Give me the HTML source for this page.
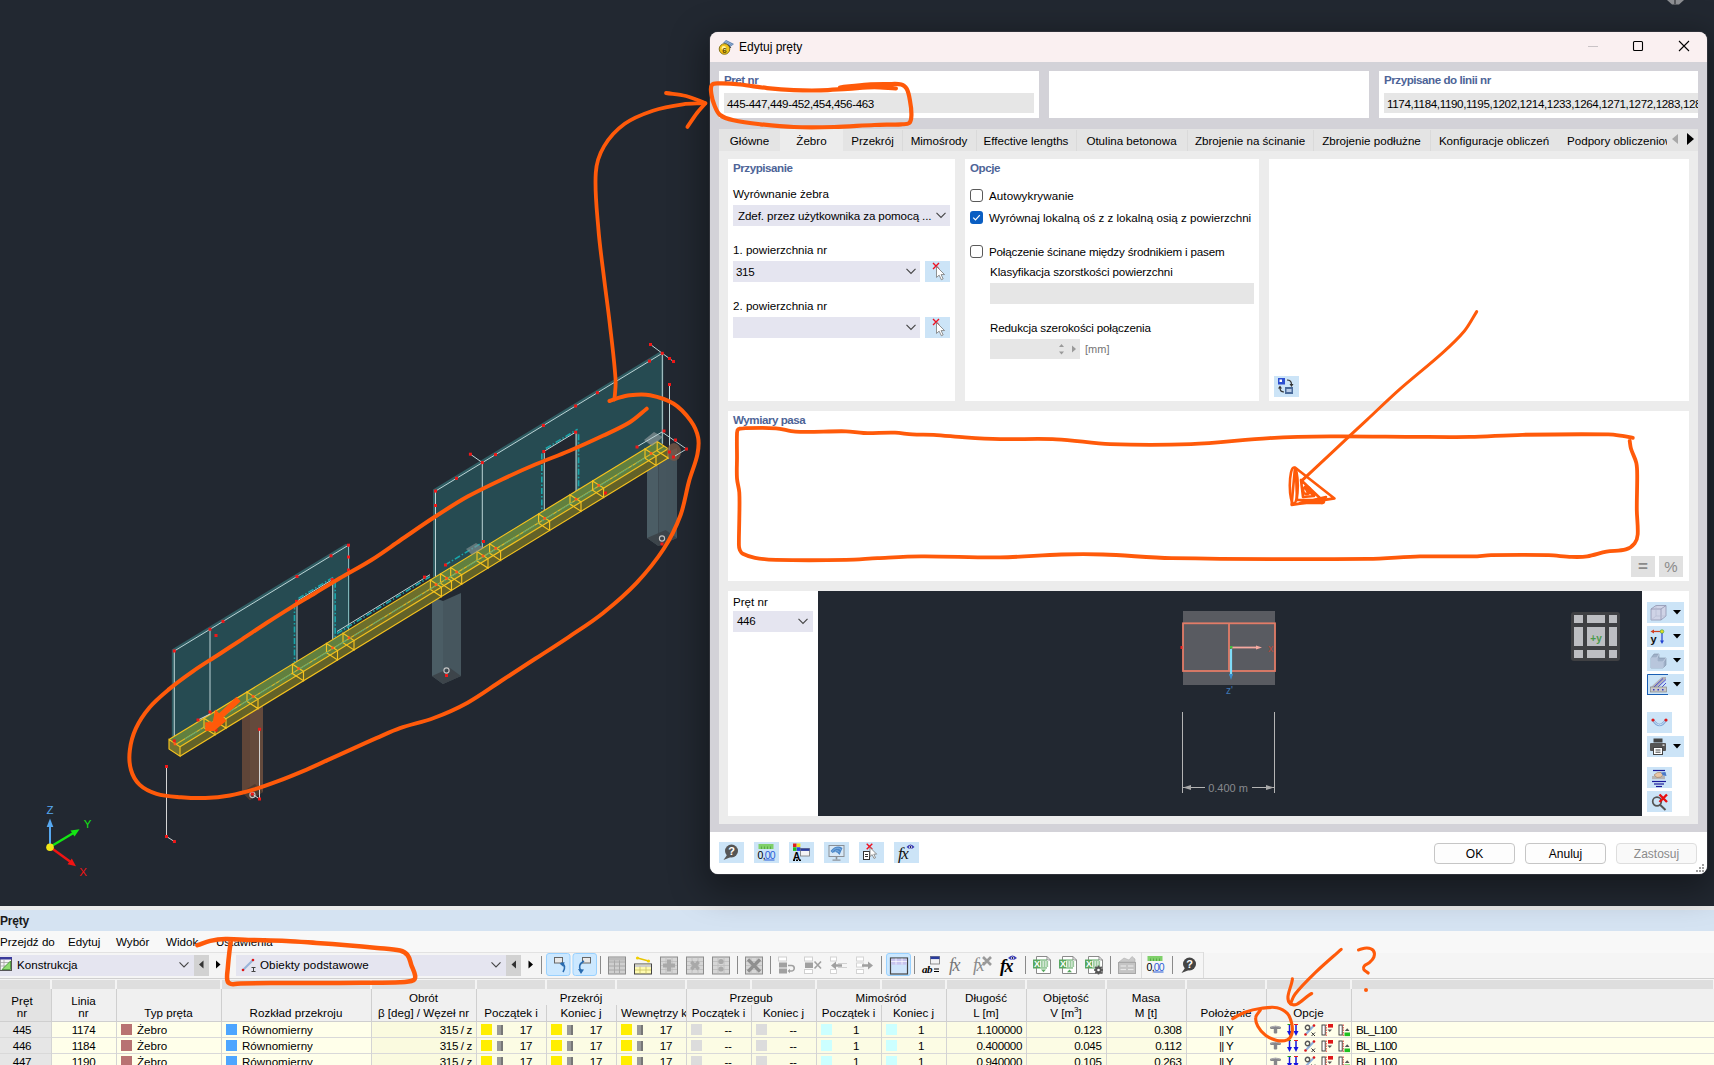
<!DOCTYPE html><html lang="pl"><head><meta charset="utf-8"><title>Edytuj pręty</title><style>
html,body{margin:0;padding:0;}
body{width:1714px;height:1065px;overflow:hidden;background:#222831;position:relative;font-family:"Liberation Sans",sans-serif;font-size:11.6px;color:#000;}
div{position:absolute;box-sizing:border-box;}
.t{white-space:nowrap;overflow:visible;}
.n{white-space:nowrap;letter-spacing:-0.36px;}
.b{font-weight:bold;color:#4d6497;white-space:nowrap;letter-spacing:-0.45px;}
svg{position:absolute;left:0;top:0;overflow:visible;}
.ib{background:#cce4f7;}
</style></head><body>
<svg width="1714" height="1065" viewBox="0 0 1714 1065">
<polygon points="171.8,649.5 346.0,543.7 349.5,545.7 349.5,635.5 171.8,739.9" fill="#2f5c62"/>
<polygon points="174.3,741.9 174.3,651.0 348.5,545.2 348.5,635.5" fill="#264b52"/>
<polygon points="296.5,667.2 296.5,601.4 332.2,579.7 332.2,645.4" fill="#222831"/>
<polygon points="332.2,579.7 335.2,581.2 335.2,645.4 332.2,645.4" fill="#2f5c62"/>
<g stroke="#bcd4d6" stroke-width="1" fill="none">
<line x1="174.3" y1="741.9" x2="174.3" y2="651.0" />
<line x1="174.3" y1="651.0" x2="348.5" y2="545.2" />
<line x1="348.5" y1="545.2" x2="348.5" y2="635.5" stroke="#7fb5b8"/>
<line x1="210.0" y1="629.3" x2="210.0" y2="720.1" />
<line x1="296.5" y1="601.4" x2="332.2" y2="579.7" />
<line x1="297.0" y1="601.4" x2="297.0" y2="667.2" />
<line x1="332.7" y1="579.7" x2="332.7" y2="645.4" />
</g>
<g stroke="#19a5aa" stroke-width="1.6" stroke-dasharray="6 2 1.5 2" fill="none">
<line x1="294.5" y1="603.4" x2="294.5" y2="667.2" />
<line x1="335.2" y1="581.7" x2="335.2" y2="645.4" />
<line x1="298.5" y1="598.4" x2="334.2" y2="576.7" />
</g>
<polygon points="433.0,489.6 659.8,351.8 663.3,353.8 663.3,443.8 433.0,582.3" fill="#2f5c62"/>
<polygon points="435.5,582.3 435.5,491.1 662.3,353.3 662.3,443.8" fill="#264b52"/>
<polygon points="543.8,516.2 543.8,451.5 575.6,432.2 575.6,496.8" fill="#222831"/>
<polygon points="575.6,432.2 578.6,433.7 578.6,496.8 575.6,496.8" fill="#2f5c62"/>
<g stroke="#bcd4d6" stroke-width="1" fill="none">
<line x1="435.5" y1="582.3" x2="435.5" y2="491.1" />
<line x1="435.5" y1="491.1" x2="662.3" y2="353.3" />
<line x1="662.3" y1="353.3" x2="662.3" y2="443.8" />
<line x1="482.3" y1="462.6" x2="482.3" y2="553.8" />
<line x1="470.4" y1="454.2" x2="482.3" y2="462.6" />
<line x1="543.8" y1="451.5" x2="575.6" y2="432.2" />
<line x1="544.3" y1="451.5" x2="544.3" y2="516.2" />
<line x1="576.1" y1="432.2" x2="576.1" y2="496.8" />
<line x1="650.5" y1="344.5" x2="662.3" y2="353.3" />
<line x1="662.3" y1="353.3" x2="673.5" y2="361.5" />
<line x1="669.5" y1="384.5" x2="669.5" y2="452.0" />
</g>
<g stroke="#19a5aa" stroke-width="1.6" stroke-dasharray="6 2 1.5 2" fill="none">
<line x1="541.8" y1="453.5" x2="541.8" y2="516.2" />
<line x1="578.6" y1="434.2" x2="578.6" y2="496.8" />
<line x1="545.8" y1="448.5" x2="577.6" y2="429.2" />
<line x1="337.0" y1="633.5" x2="430.0" y2="576.7" />
<line x1="445.0" y1="565.0" x2="484.0" y2="541.5" />
</g>
<line x1="337.0" y1="631.5" x2="430.0" y2="574.7" stroke="#bcd4d6" stroke-width="1"/>
<polygon points="242.0,702.0 250.0,706.0 250.0,800.0 242.0,792.0" fill="#5f4538"/><polygon points="250.0,706.0 263.0,698.0 263.0,792.0 250.0,800.0" fill="#644a3c"/><polygon points="242.0,792.0 250.0,800.0 263.0,792.0 255.0,784.0" fill="#4a392f" opacity="0.9"/>
<polygon points="432.0,597.0 443.0,601.0 443.0,684.0 432.0,676.0" fill="#4b5d65"/><polygon points="443.0,601.0 461.0,593.0 461.0,676.0 443.0,684.0" fill="#46565e"/><polygon points="432.0,676.0 443.0,684.0 461.0,676.0 450.0,668.0" fill="#3c4248" opacity="0.9"/>
<polygon points="647.0,452.0 658.4,456.0 658.4,546.0 647.0,538.0" fill="#4b5d65"/><polygon points="658.4,456.0 677.0,448.0 677.0,538.0 658.4,546.0" fill="#46565e"/><polygon points="647.0,538.0 658.4,546.0 677.0,538.0 665.6,530.0" fill="#3c4248" opacity="0.9"/>
<circle cx="446.5" cy="670.5" r="2.6" fill="none" stroke="#c4c4c4" stroke-width="1.1"/>
<circle cx="662" cy="538.5" r="2.6" fill="none" stroke="#c4c4c4" stroke-width="1.1"/>
<circle cx="252.5" cy="795" r="2.6" fill="none" stroke="#c4c4c4" stroke-width="1.1"/>
<polygon points="169.0,739.6 657.2,441.5 668.2,448.7 180.0,746.8" fill="#6f722c" fill-opacity="0.97"/>
<polygon points="169.0,739.6 343.0,633.3 354.0,640.5 180.0,746.8" fill="#61803f"/>
<polygon points="430.4,580.0 657.2,441.5 668.2,448.7 441.4,587.2" fill="#61803f"/>
<polygon points="180.0,746.8 668.2,448.7 668.2,458.1 180.0,756.2" fill="#656428" fill-opacity="0.98"/>
<polygon points="169.0,739.6 180.0,746.8 180.0,756.2 169.0,749.0" fill="#7d7a30" fill-opacity="0.9"/>
<g stroke="#f5c21e" stroke-width="1.15" fill="none">
<line x1="169.0" y1="739.6" x2="657.2" y2="441.5" />
<line x1="180.0" y1="746.8" x2="668.2" y2="448.7" />
<line x1="180.0" y1="756.2" x2="668.2" y2="458.1" />
<line x1="176.0" y1="744.2" x2="664.2" y2="446.1" stroke-opacity="0.85"/>
<polygon points="169.0,739.6 180.0,746.8 180.0,756.2 169.0,749.0" />
<polygon points="204.0,718.2 215.0,725.4 215.0,734.8 204.0,727.6" />
<polygon points="215.0,711.5 226.0,718.7 226.0,728.1 215.0,720.9" />
<polygon points="247.0,692.0 258.0,699.2 258.0,708.6 247.0,701.4" />
<polygon points="292.5,664.2 303.5,671.4 303.5,680.8 292.5,673.6" />
<polygon points="326.5,643.4 337.5,650.6 337.5,660.0 326.5,652.8" />
<polygon points="343.0,633.3 354.0,640.5 354.0,649.9 343.0,642.7" />
<polygon points="430.4,580.0 441.4,587.2 441.4,596.6 430.4,589.4" />
<polygon points="440.5,573.8 451.5,581.0 451.5,590.4 440.5,583.2" />
<polygon points="450.7,567.6 461.7,574.8 461.7,584.2 450.7,577.0" />
<polygon points="477.0,551.5 488.0,558.7 488.0,568.1 477.0,560.9" />
<polygon points="489.6,543.8 500.6,551.0 500.6,560.4 489.6,553.2" />
<polygon points="538.6,513.9 549.6,521.1 549.6,530.5 538.6,523.3" />
<polygon points="570.0,494.7 581.0,501.9 581.0,511.3 570.0,504.1" />
<polygon points="592.6,480.9 603.6,488.1 603.6,497.5 592.6,490.3" />
<polygon points="645.0,448.9 656.0,456.1 656.0,465.5 645.0,458.3" />
<polygon points="657.2,441.5 668.2,448.7 668.2,458.1 657.2,450.9" />
</g>
<line x1="185.0" y1="738.9" x2="645.0" y2="458.0" stroke="#1aa3a8" stroke-width="1" stroke-opacity="0.7" stroke-dasharray="14 3 2 3"/>
<rect x="173.7" y="742.7" width="2.6" height="2.6" fill="#ff5a1a"/>
<rect x="208.7" y="721.4" width="2.6" height="2.6" fill="#ff5a1a"/>
<rect x="251.7" y="695.1" width="2.6" height="2.6" fill="#ff5a1a"/>
<rect x="297.2" y="667.3" width="2.6" height="2.6" fill="#ff5a1a"/>
<rect x="331.2" y="646.6" width="2.6" height="2.6" fill="#ff5a1a"/>
<rect x="347.7" y="636.5" width="2.6" height="2.6" fill="#ff5a1a"/>
<rect x="434.7" y="583.4" width="2.6" height="2.6" fill="#ff5a1a"/>
<rect x="445.2" y="576.9" width="2.6" height="2.6" fill="#ff5a1a"/>
<rect x="455.4" y="570.7" width="2.6" height="2.6" fill="#ff5a1a"/>
<rect x="481.7" y="554.7" width="2.6" height="2.6" fill="#ff5a1a"/>
<rect x="494.3" y="547.0" width="2.6" height="2.6" fill="#ff5a1a"/>
<rect x="543.3" y="517.0" width="2.6" height="2.6" fill="#ff5a1a"/>
<rect x="574.7" y="497.9" width="2.6" height="2.6" fill="#ff5a1a"/>
<rect x="597.3" y="484.1" width="2.6" height="2.6" fill="#ff5a1a"/>
<rect x="649.7" y="452.1" width="2.6" height="2.6" fill="#ff5a1a"/>
<ellipse cx="674" cy="452" rx="7" ry="9" fill="#7a5a48" opacity="0.8"/>
<polygon points="644,440 654,432 663,437 652,446" fill="#8a9698" opacity="0.7"/>
<polygon points="466,549 476,543 484,548 472,555" fill="#8a9698" opacity="0.6"/>
<g stroke="#bcd4d6" stroke-width="1" fill="none"><polyline points="636.5,447 662,432 686.5,449 675,456"/></g>
<g stroke="#d5d5d5" stroke-width="1" fill="none">
<line x1="166.5" y1="766.5" x2="166.5" y2="836.5" />
<line x1="166.5" y1="836.5" x2="174.4" y2="841.5" />
<line x1="259.5" y1="729.3" x2="259.5" y2="799.0" />
<line x1="252.3" y1="794.0" x2="259.5" y2="799.0" />
<line x1="198.0" y1="720.0" x2="210.0" y2="714.0" />
</g>
<rect x="172.8" y="649.5" width="3.0" height="3.0" fill="#f01818"/>
<rect x="172.8" y="739.4" width="3.0" height="3.0" fill="#f01818"/>
<rect x="347.0" y="543.7" width="3.0" height="3.0" fill="#f01818"/>
<rect x="208.5" y="627.8" width="3.0" height="3.0" fill="#f01818"/>
<rect x="221.5" y="619.9" width="3.0" height="3.0" fill="#f01818"/>
<rect x="295.5" y="575.0" width="3.0" height="3.0" fill="#f01818"/>
<rect x="329.5" y="554.3" width="3.0" height="3.0" fill="#f01818"/>
<rect x="347.0" y="555.5" width="3.0" height="3.0" fill="#f01818"/>
<rect x="347.0" y="568.5" width="3.0" height="3.0" fill="#f01818"/>
<rect x="214.5" y="634.0" width="3.0" height="3.0" fill="#f01818"/>
<rect x="295.0" y="599.9" width="3.0" height="3.0" fill="#f01818"/>
<rect x="330.7" y="578.2" width="3.0" height="3.0" fill="#f01818"/>
<rect x="165.0" y="765.0" width="3.0" height="3.0" fill="#f01818"/>
<rect x="165.0" y="835.0" width="3.0" height="3.0" fill="#f01818"/>
<rect x="172.9" y="840.0" width="3.0" height="3.0" fill="#f01818"/>
<rect x="258.0" y="727.8" width="3.0" height="3.0" fill="#f01818"/>
<rect x="258.0" y="797.5" width="3.0" height="3.0" fill="#f01818"/>
<rect x="250.8" y="792.5" width="3.0" height="3.0" fill="#f01818"/>
<rect x="196.5" y="718.5" width="3.0" height="3.0" fill="#f01818"/>
<rect x="208.5" y="710.5" width="3.0" height="3.0" fill="#f01818"/>
<rect x="214.5" y="728.5" width="3.0" height="3.0" fill="#f01818"/>
<rect x="434.0" y="489.6" width="3.0" height="3.0" fill="#f01818"/>
<rect x="434.0" y="504.0" width="3.0" height="3.0" fill="#f01818"/>
<rect x="660.8" y="351.8" width="3.0" height="3.0" fill="#f01818"/>
<rect x="455.0" y="476.8" width="3.0" height="3.0" fill="#f01818"/>
<rect x="480.8" y="461.1" width="3.0" height="3.0" fill="#f01818"/>
<rect x="494.0" y="453.1" width="3.0" height="3.0" fill="#f01818"/>
<rect x="541.9" y="424.0" width="3.0" height="3.0" fill="#f01818"/>
<rect x="574.1" y="404.5" width="3.0" height="3.0" fill="#f01818"/>
<rect x="595.9" y="391.2" width="3.0" height="3.0" fill="#f01818"/>
<rect x="648.0" y="359.6" width="3.0" height="3.0" fill="#f01818"/>
<rect x="468.9" y="452.7" width="3.0" height="3.0" fill="#f01818"/>
<rect x="542.3" y="450.0" width="3.0" height="3.0" fill="#f01818"/>
<rect x="574.1" y="430.7" width="3.0" height="3.0" fill="#f01818"/>
<rect x="649.0" y="343.0" width="3.0" height="3.0" fill="#f01818"/>
<rect x="668.0" y="357.0" width="3.0" height="3.0" fill="#f01818"/>
<rect x="672.0" y="360.0" width="3.0" height="3.0" fill="#f01818"/>
<rect x="668.0" y="383.0" width="3.0" height="3.0" fill="#f01818"/>
<rect x="668.0" y="450.5" width="3.0" height="3.0" fill="#f01818"/>
<rect x="662.5" y="429.5" width="3.0" height="3.0" fill="#f01818"/>
<rect x="674.0" y="438.5" width="3.0" height="3.0" fill="#f01818"/>
<rect x="685.0" y="447.5" width="3.0" height="3.0" fill="#f01818"/>
<rect x="672.0" y="455.5" width="3.0" height="3.0" fill="#f01818"/>
<rect x="635.5" y="445.5" width="3.0" height="3.0" fill="#f01818"/>
<rect x="423.0" y="575.6" width="3.0" height="3.0" fill="#f01818"/>
<rect x="444.0" y="563.5" width="3.0" height="3.0" fill="#f01818"/>
<rect x="604.0" y="491.5" width="3.0" height="3.0" fill="#f01818"/>
<rect x="660.5" y="542.5" width="3.0" height="3.0" fill="#f01818"/>
<rect x="445.0" y="674.0" width="3.0" height="3.0" fill="#f01818"/>
<rect x="482.0" y="540.0" width="3.0" height="3.0" fill="#f01818"/>
<g stroke-linecap="butt">
<line x1="50" y1="847" x2="50" y2="826" stroke="#57a8f0" stroke-width="2"/><polygon points="46.7,827 53.3,827 50,818.5" fill="#57a8f0"/>
<line x1="50" y1="847" x2="73" y2="833.2" stroke="#14e614" stroke-width="2.4"/><polygon points="70.5,830.5 74.5,836.5 79.5,829.3" fill="#14e614"/>
<line x1="50" y1="847" x2="70" y2="861.5" stroke="#f01414" stroke-width="2.4"/><polygon points="71.8,858.5 67.5,864.2 76,866.2" fill="#f01414"/>
<circle cx="50" cy="847.2" r="3.8" fill="#f2e616"/></g>
<g font-family="Liberation Sans, sans-serif" font-size="11.5" text-anchor="middle"><text x="50" y="814" fill="#57a8f0">Z</text><text x="87.5" y="828" fill="#14e614">Y</text><text x="83" y="876" fill="#f01414">X</text></g>
<path d="M1667 0 L1684 0 L1679 4.5 L1672 4.5 Z" fill="#8d8f93"/><rect x="1674" y="0" width="2" height="4.5" fill="#55575b"/>
</svg>
<div style="left:0px;top:906px;width:1714px;height:159px;background:#f0f0f0;"></div>
<div style="left:0px;top:931px;width:1714px;height:22px;background:#f8f8f8;"></div>
<div style="left:0px;top:953px;width:1714px;height:26px;background:#f5f5f5;"></div>
<div style="left:0px;top:952px;width:1204px;height:1px;background:#e2e2e2;"></div>
<div style="left:0px;top:906px;width:1714px;height:4px;background:#ebebeb;"></div>
<div style="left:0px;top:910px;width:1714px;height:21px;background:#d5e3f2;"></div>
<div class="t" style="left:0px;top:912px;height:18px;line-height:18px;font-size:12px;color:#1a1a1a;font-weight:bold;letter-spacing:-0.2px;">Pręty</div>
<div class="t" style="left:0px;top:933px;height:18px;line-height:18px;">Przejdź do</div>
<div class="t" style="left:68px;top:933px;height:18px;line-height:18px;">Edytuj</div>
<div class="t" style="left:116px;top:933px;height:18px;line-height:18px;">Wybór</div>
<div class="t" style="left:166px;top:933px;height:18px;line-height:18px;">Widok</div>
<div class="t" style="left:216px;top:933px;height:18px;line-height:18px;">Ustawienia</div>
<div style="left:0px;top:954.5px;width:194px;height:21px;background:#e5e5f0;"></div>
<div class="t" style="left:17px;top:956px;height:17px;line-height:17px;">Konstrukcja</div>
<div style="left:194px;top:954.5px;width:15px;height:21px;background:#d2d2d2;"></div>
<div style="left:236px;top:954.5px;width:270px;height:21px;background:#e5e5f0;"></div>
<div class="t" style="left:260px;top:956px;height:17px;line-height:17px;letter-spacing:0.1px;">Obiekty podstawowe</div>
<div style="left:506px;top:954.5px;width:15px;height:21px;background:#d2d2d2;"></div>
<!--TBICONS-->
<div style="left:0px;top:978px;width:1714px;height:1px;background:#d0d0d0;"></div>
<div style="left:0px;top:979px;width:1714px;height:10px;background:#f4f4f4;"></div>
<div style="left:0px;top:980px;width:50px;height:9px;background:#dedede;"></div>
<div style="left:52px;top:980px;width:63px;height:9px;background:#dedede;"></div>
<div style="left:117px;top:980px;width:103px;height:9px;background:#dedede;"></div>
<div style="left:222px;top:980px;width:148px;height:9px;background:#dedede;"></div>
<div style="left:372px;top:980px;width:103px;height:9px;background:#dedede;"></div>
<div style="left:477px;top:980px;width:68px;height:9px;background:#dedede;"></div>
<div style="left:547px;top:980px;width:68px;height:9px;background:#dedede;"></div>
<div style="left:617px;top:980px;width:68px;height:9px;background:#dedede;"></div>
<div style="left:687px;top:980px;width:63px;height:9px;background:#dedede;"></div>
<div style="left:752px;top:980px;width:63px;height:9px;background:#dedede;"></div>
<div style="left:817px;top:980px;width:63px;height:9px;background:#dedede;"></div>
<div style="left:882px;top:980px;width:63px;height:9px;background:#dedede;"></div>
<div style="left:947px;top:980px;width:78px;height:9px;background:#dedede;"></div>
<div style="left:1027px;top:980px;width:78px;height:9px;background:#dedede;"></div>
<div style="left:1107px;top:980px;width:78px;height:9px;background:#dedede;"></div>
<div style="left:1187px;top:980px;width:78px;height:9px;background:#dedede;"></div>
<div style="left:1267px;top:980px;width:83px;height:9px;background:#dedede;"></div>
<div style="left:1352px;top:980px;width:361px;height:9px;background:#dedede;"></div>
<div style="left:0px;top:989px;width:1714px;height:32px;background:#f0f0f0;"></div>
<div style="left:0px;top:989px;width:51px;height:32px;background:#e3e3e3;"></div>
<div style="left:51px;top:989px;width:1px;height:32px;background:#cfcfcf;"></div>
<div style="left:116px;top:989px;width:1px;height:32px;background:#cfcfcf;"></div>
<div style="left:221px;top:989px;width:1px;height:32px;background:#cfcfcf;"></div>
<div style="left:371px;top:989px;width:1px;height:32px;background:#cfcfcf;"></div>
<div style="left:476px;top:989px;width:1px;height:32px;background:#cfcfcf;"></div>
<div style="left:546px;top:989px;width:1px;height:32px;background:#cfcfcf;"></div>
<div style="left:616px;top:989px;width:1px;height:32px;background:#cfcfcf;"></div>
<div style="left:686px;top:989px;width:1px;height:32px;background:#cfcfcf;"></div>
<div style="left:751px;top:989px;width:1px;height:32px;background:#cfcfcf;"></div>
<div style="left:816px;top:989px;width:1px;height:32px;background:#cfcfcf;"></div>
<div style="left:881px;top:989px;width:1px;height:32px;background:#cfcfcf;"></div>
<div style="left:946px;top:989px;width:1px;height:32px;background:#cfcfcf;"></div>
<div style="left:1026px;top:989px;width:1px;height:32px;background:#cfcfcf;"></div>
<div style="left:1106px;top:989px;width:1px;height:32px;background:#cfcfcf;"></div>
<div style="left:1186px;top:989px;width:1px;height:32px;background:#cfcfcf;"></div>
<div style="left:1266px;top:989px;width:1px;height:32px;background:#cfcfcf;"></div>
<div style="left:1351px;top:989px;width:1px;height:32px;background:#cfcfcf;"></div>
<div style="left:546px;top:989px;width:1px;height:16px;background:#f0f0f0;"></div>
<div style="left:616px;top:989px;width:1px;height:16px;background:#f0f0f0;"></div>
<div style="left:751px;top:989px;width:1px;height:16px;background:#f0f0f0;"></div>
<div style="left:881px;top:989px;width:1px;height:16px;background:#f0f0f0;"></div>
<div style="left:0px;top:1021px;width:1714px;height:1px;background:#cfcfcf;"></div>
<div class="t" style="left:0px;top:992.5px;height:15px;line-height:15px;width:44px;text-align:center;">Pręt</div>
<div class="t" style="left:0px;top:1005px;height:16px;line-height:16px;width:44px;text-align:center;">nr</div>
<div class="t" style="left:51px;top:992.5px;height:15px;line-height:15px;width:65px;text-align:center;">Linia</div>
<div class="t" style="left:51px;top:1005px;height:16px;line-height:16px;width:65px;text-align:center;">nr</div>
<div class="t" style="left:116px;top:1005px;height:16px;line-height:16px;width:105px;text-align:center;">Typ pręta</div>
<div class="t" style="left:221px;top:1005px;height:16px;line-height:16px;width:150px;text-align:center;">Rozkład przekroju</div>
<div class="t" style="left:371px;top:989.5px;height:15px;line-height:15px;width:105px;text-align:center;">Obrót</div>
<div class="t" style="left:371px;top:1005px;height:16px;line-height:16px;width:105px;text-align:center;">β [deg] / Węzeł nr</div>
<div class="t" style="left:476px;top:989.5px;height:15px;line-height:15px;width:210px;text-align:center;">Przekrój</div>
<div class="t" style="left:476px;top:1005px;height:16px;line-height:16px;width:70px;text-align:center;">Początek i</div>
<div class="t" style="left:546px;top:1005px;height:16px;line-height:16px;width:70px;text-align:center;">Koniec j</div>
<div class="t" style="left:616px;top:1005px;width:70px;height:16px;line-height:16px;overflow:hidden;padding-left:5px;">Wewnętrzy k</div>
<div class="t" style="left:686px;top:989.5px;height:15px;line-height:15px;width:130px;text-align:center;">Przegub</div>
<div class="t" style="left:686px;top:1005px;height:16px;line-height:16px;width:65px;text-align:center;">Początek i</div>
<div class="t" style="left:751px;top:1005px;height:16px;line-height:16px;width:65px;text-align:center;">Koniec j</div>
<div class="t" style="left:816px;top:989.5px;height:15px;line-height:15px;width:130px;text-align:center;">Mimośród</div>
<div class="t" style="left:816px;top:1005px;height:16px;line-height:16px;width:65px;text-align:center;">Początek i</div>
<div class="t" style="left:881px;top:1005px;height:16px;line-height:16px;width:65px;text-align:center;">Koniec j</div>
<div class="t" style="left:946px;top:989.5px;height:15px;line-height:15px;width:80px;text-align:center;">Długość</div>
<div class="t" style="left:946px;top:1005px;height:16px;line-height:16px;width:80px;text-align:center;">L [m]</div>
<div class="t" style="left:1026px;top:989.5px;height:15px;line-height:15px;width:80px;text-align:center;">Objętość</div>
<div class="t" style="left:1026px;top:1005px;height:16px;line-height:16px;width:80px;text-align:center;">V [m<sup style="font-size:8px;line-height:0;">3</sup>]</div>
<div class="t" style="left:1106px;top:989.5px;height:15px;line-height:15px;width:80px;text-align:center;">Masa</div>
<div class="t" style="left:1106px;top:1005px;height:16px;line-height:16px;width:80px;text-align:center;">M [t]</div>
<div class="t" style="left:1186px;top:1005px;height:16px;line-height:16px;width:80px;text-align:center;">Położenie</div>
<div class="t" style="left:1266px;top:1005px;height:16px;line-height:16px;width:85px;text-align:center;">Opcje</div>
<div style="left:0px;top:1022px;width:51px;height:16px;background:#e6e6e6;"></div>
<div style="left:51px;top:1022px;width:1663px;height:16px;background:#ffffea;"></div>
<div style="left:371px;top:1022px;width:105px;height:16px;background:#fafadf;"></div>
<div style="left:476px;top:1022px;width:710px;height:16px;background:#fcfce4;"></div>
<div style="left:0px;top:1037px;width:1714px;height:1px;background:#d9d9d9;"></div>
<div style="left:51px;top:1022px;width:1px;height:16px;background:#d4d4d4;"></div>
<div style="left:116px;top:1022px;width:1px;height:16px;background:#d4d4d4;"></div>
<div style="left:221px;top:1022px;width:1px;height:16px;background:#d4d4d4;"></div>
<div style="left:371px;top:1022px;width:1px;height:16px;background:#d4d4d4;"></div>
<div style="left:476px;top:1022px;width:1px;height:16px;background:#d4d4d4;"></div>
<div style="left:546px;top:1022px;width:1px;height:16px;background:#d4d4d4;"></div>
<div style="left:616px;top:1022px;width:1px;height:16px;background:#d4d4d4;"></div>
<div style="left:686px;top:1022px;width:1px;height:16px;background:#d4d4d4;"></div>
<div style="left:751px;top:1022px;width:1px;height:16px;background:#d4d4d4;"></div>
<div style="left:816px;top:1022px;width:1px;height:16px;background:#d4d4d4;"></div>
<div style="left:881px;top:1022px;width:1px;height:16px;background:#d4d4d4;"></div>
<div style="left:946px;top:1022px;width:1px;height:16px;background:#d4d4d4;"></div>
<div style="left:1026px;top:1022px;width:1px;height:16px;background:#d4d4d4;"></div>
<div style="left:1106px;top:1022px;width:1px;height:16px;background:#d4d4d4;"></div>
<div style="left:1186px;top:1022px;width:1px;height:16px;background:#d4d4d4;"></div>
<div style="left:1266px;top:1022px;width:1px;height:16px;background:#d4d4d4;"></div>
<div style="left:1351px;top:1022px;width:1px;height:16px;background:#d4d4d4;"></div>
<div class="n" style="left:0px;top:1022px;height:15px;line-height:15px;width:44px;text-align:center;">445</div>
<div class="n" style="left:51px;top:1022px;height:15px;line-height:15px;width:65px;text-align:center;">1174</div>
<div style="left:121px;top:1024px;width:11px;height:11px;background:#b87272;"></div>
<div class="t" style="left:137px;top:1022px;height:15px;line-height:15px;">Żebro</div>
<div style="left:226px;top:1024px;width:11px;height:11px;background:#4da6ff;"></div>
<div class="t" style="left:242px;top:1022px;height:15px;line-height:15px;">Równomierny</div>
<div class="n" style="left:371px;top:1022px;height:15px;line-height:15px;width:101px;text-align:right;">315 / z</div>
<div style="left:481px;top:1024px;width:11px;height:11px;background:#ffee00;"></div>
<div style="left:497px;top:1025px;width:6px;height:10px;background:#9a9a9a;border-right:2px solid #777;"></div>
<div class="n" style="left:506px;top:1022px;height:15px;line-height:15px;width:26px;text-align:right;">17</div>
<div style="left:551px;top:1024px;width:11px;height:11px;background:#ffee00;"></div>
<div style="left:567px;top:1025px;width:6px;height:10px;background:#9a9a9a;border-right:2px solid #777;"></div>
<div class="n" style="left:576px;top:1022px;height:15px;line-height:15px;width:26px;text-align:right;">17</div>
<div style="left:621px;top:1024px;width:11px;height:11px;background:#ffee00;"></div>
<div style="left:637px;top:1025px;width:6px;height:10px;background:#9a9a9a;border-right:2px solid #777;"></div>
<div class="n" style="left:646px;top:1022px;height:15px;line-height:15px;width:26px;text-align:right;">17</div>
<div style="left:691px;top:1024px;width:11px;height:11px;background:#dcdcdc;"></div>
<div class="n" style="left:718px;top:1022px;height:15px;line-height:15px;width:20px;text-align:center;">--</div>
<div style="left:756px;top:1024px;width:11px;height:11px;background:#dcdcdc;"></div>
<div class="n" style="left:783px;top:1022px;height:15px;line-height:15px;width:20px;text-align:center;">--</div>
<div style="left:821px;top:1024px;width:11px;height:11px;background:#ccffff;"></div>
<div class="n" style="left:846px;top:1022px;height:15px;line-height:15px;width:20px;text-align:center;">1</div>
<div style="left:886px;top:1024px;width:11px;height:11px;background:#ccffff;"></div>
<div class="n" style="left:911px;top:1022px;height:15px;line-height:15px;width:20px;text-align:center;">1</div>
<div class="n" style="left:946px;top:1022px;height:15px;line-height:15px;width:76px;text-align:right;">1.100000</div>
<div class="n" style="left:1026px;top:1022px;height:15px;line-height:15px;width:75.5px;text-align:right;">0.123</div>
<div class="n" style="left:1106px;top:1022px;height:15px;line-height:15px;width:75.5px;text-align:right;">0.308</div>
<div class="t" style="left:1186px;top:1022px;height:15px;line-height:15px;width:80px;text-align:center;letter-spacing:-0.7px;">|| Y</div>
<div class="t" style="left:1356px;top:1022px;height:15px;line-height:15px;letter-spacing:-0.85px;">BL_L100</div>
<div style="left:0px;top:1038px;width:51px;height:16px;background:#e6e6e6;"></div>
<div style="left:51px;top:1038px;width:1663px;height:16px;background:#ffffea;"></div>
<div style="left:371px;top:1038px;width:105px;height:16px;background:#fafadf;"></div>
<div style="left:476px;top:1038px;width:710px;height:16px;background:#fcfce4;"></div>
<div style="left:0px;top:1053px;width:1714px;height:1px;background:#d9d9d9;"></div>
<div style="left:51px;top:1038px;width:1px;height:16px;background:#d4d4d4;"></div>
<div style="left:116px;top:1038px;width:1px;height:16px;background:#d4d4d4;"></div>
<div style="left:221px;top:1038px;width:1px;height:16px;background:#d4d4d4;"></div>
<div style="left:371px;top:1038px;width:1px;height:16px;background:#d4d4d4;"></div>
<div style="left:476px;top:1038px;width:1px;height:16px;background:#d4d4d4;"></div>
<div style="left:546px;top:1038px;width:1px;height:16px;background:#d4d4d4;"></div>
<div style="left:616px;top:1038px;width:1px;height:16px;background:#d4d4d4;"></div>
<div style="left:686px;top:1038px;width:1px;height:16px;background:#d4d4d4;"></div>
<div style="left:751px;top:1038px;width:1px;height:16px;background:#d4d4d4;"></div>
<div style="left:816px;top:1038px;width:1px;height:16px;background:#d4d4d4;"></div>
<div style="left:881px;top:1038px;width:1px;height:16px;background:#d4d4d4;"></div>
<div style="left:946px;top:1038px;width:1px;height:16px;background:#d4d4d4;"></div>
<div style="left:1026px;top:1038px;width:1px;height:16px;background:#d4d4d4;"></div>
<div style="left:1106px;top:1038px;width:1px;height:16px;background:#d4d4d4;"></div>
<div style="left:1186px;top:1038px;width:1px;height:16px;background:#d4d4d4;"></div>
<div style="left:1266px;top:1038px;width:1px;height:16px;background:#d4d4d4;"></div>
<div style="left:1351px;top:1038px;width:1px;height:16px;background:#d4d4d4;"></div>
<div class="n" style="left:0px;top:1038px;height:15px;line-height:15px;width:44px;text-align:center;">446</div>
<div class="n" style="left:51px;top:1038px;height:15px;line-height:15px;width:65px;text-align:center;">1184</div>
<div style="left:121px;top:1040px;width:11px;height:11px;background:#b87272;"></div>
<div class="t" style="left:137px;top:1038px;height:15px;line-height:15px;">Żebro</div>
<div style="left:226px;top:1040px;width:11px;height:11px;background:#4da6ff;"></div>
<div class="t" style="left:242px;top:1038px;height:15px;line-height:15px;">Równomierny</div>
<div class="n" style="left:371px;top:1038px;height:15px;line-height:15px;width:101px;text-align:right;">315 / z</div>
<div style="left:481px;top:1040px;width:11px;height:11px;background:#ffee00;"></div>
<div style="left:497px;top:1041px;width:6px;height:10px;background:#9a9a9a;border-right:2px solid #777;"></div>
<div class="n" style="left:506px;top:1038px;height:15px;line-height:15px;width:26px;text-align:right;">17</div>
<div style="left:551px;top:1040px;width:11px;height:11px;background:#ffee00;"></div>
<div style="left:567px;top:1041px;width:6px;height:10px;background:#9a9a9a;border-right:2px solid #777;"></div>
<div class="n" style="left:576px;top:1038px;height:15px;line-height:15px;width:26px;text-align:right;">17</div>
<div style="left:621px;top:1040px;width:11px;height:11px;background:#ffee00;"></div>
<div style="left:637px;top:1041px;width:6px;height:10px;background:#9a9a9a;border-right:2px solid #777;"></div>
<div class="n" style="left:646px;top:1038px;height:15px;line-height:15px;width:26px;text-align:right;">17</div>
<div style="left:691px;top:1040px;width:11px;height:11px;background:#dcdcdc;"></div>
<div class="n" style="left:718px;top:1038px;height:15px;line-height:15px;width:20px;text-align:center;">--</div>
<div style="left:756px;top:1040px;width:11px;height:11px;background:#dcdcdc;"></div>
<div class="n" style="left:783px;top:1038px;height:15px;line-height:15px;width:20px;text-align:center;">--</div>
<div style="left:821px;top:1040px;width:11px;height:11px;background:#ccffff;"></div>
<div class="n" style="left:846px;top:1038px;height:15px;line-height:15px;width:20px;text-align:center;">1</div>
<div style="left:886px;top:1040px;width:11px;height:11px;background:#ccffff;"></div>
<div class="n" style="left:911px;top:1038px;height:15px;line-height:15px;width:20px;text-align:center;">1</div>
<div class="n" style="left:946px;top:1038px;height:15px;line-height:15px;width:76px;text-align:right;">0.400000</div>
<div class="n" style="left:1026px;top:1038px;height:15px;line-height:15px;width:75.5px;text-align:right;">0.045</div>
<div class="n" style="left:1106px;top:1038px;height:15px;line-height:15px;width:75.5px;text-align:right;">0.112</div>
<div class="t" style="left:1186px;top:1038px;height:15px;line-height:15px;width:80px;text-align:center;letter-spacing:-0.7px;">|| Y</div>
<div class="t" style="left:1356px;top:1038px;height:15px;line-height:15px;letter-spacing:-0.85px;">BL_L100</div>
<div style="left:0px;top:1054px;width:51px;height:16px;background:#e6e6e6;"></div>
<div style="left:51px;top:1054px;width:1663px;height:16px;background:#ffffea;"></div>
<div style="left:371px;top:1054px;width:105px;height:16px;background:#fafadf;"></div>
<div style="left:476px;top:1054px;width:710px;height:16px;background:#fcfce4;"></div>
<div style="left:0px;top:1069px;width:1714px;height:1px;background:#d9d9d9;"></div>
<div style="left:51px;top:1054px;width:1px;height:16px;background:#d4d4d4;"></div>
<div style="left:116px;top:1054px;width:1px;height:16px;background:#d4d4d4;"></div>
<div style="left:221px;top:1054px;width:1px;height:16px;background:#d4d4d4;"></div>
<div style="left:371px;top:1054px;width:1px;height:16px;background:#d4d4d4;"></div>
<div style="left:476px;top:1054px;width:1px;height:16px;background:#d4d4d4;"></div>
<div style="left:546px;top:1054px;width:1px;height:16px;background:#d4d4d4;"></div>
<div style="left:616px;top:1054px;width:1px;height:16px;background:#d4d4d4;"></div>
<div style="left:686px;top:1054px;width:1px;height:16px;background:#d4d4d4;"></div>
<div style="left:751px;top:1054px;width:1px;height:16px;background:#d4d4d4;"></div>
<div style="left:816px;top:1054px;width:1px;height:16px;background:#d4d4d4;"></div>
<div style="left:881px;top:1054px;width:1px;height:16px;background:#d4d4d4;"></div>
<div style="left:946px;top:1054px;width:1px;height:16px;background:#d4d4d4;"></div>
<div style="left:1026px;top:1054px;width:1px;height:16px;background:#d4d4d4;"></div>
<div style="left:1106px;top:1054px;width:1px;height:16px;background:#d4d4d4;"></div>
<div style="left:1186px;top:1054px;width:1px;height:16px;background:#d4d4d4;"></div>
<div style="left:1266px;top:1054px;width:1px;height:16px;background:#d4d4d4;"></div>
<div style="left:1351px;top:1054px;width:1px;height:16px;background:#d4d4d4;"></div>
<div class="n" style="left:0px;top:1054px;height:15px;line-height:15px;width:44px;text-align:center;">447</div>
<div class="n" style="left:51px;top:1054px;height:15px;line-height:15px;width:65px;text-align:center;">1190</div>
<div style="left:121px;top:1056px;width:11px;height:11px;background:#b87272;"></div>
<div class="t" style="left:137px;top:1054px;height:15px;line-height:15px;">Żebro</div>
<div style="left:226px;top:1056px;width:11px;height:11px;background:#4da6ff;"></div>
<div class="t" style="left:242px;top:1054px;height:15px;line-height:15px;">Równomierny</div>
<div class="n" style="left:371px;top:1054px;height:15px;line-height:15px;width:101px;text-align:right;">315 / z</div>
<div style="left:481px;top:1056px;width:11px;height:11px;background:#ffee00;"></div>
<div style="left:497px;top:1057px;width:6px;height:10px;background:#9a9a9a;border-right:2px solid #777;"></div>
<div class="n" style="left:506px;top:1054px;height:15px;line-height:15px;width:26px;text-align:right;">17</div>
<div style="left:551px;top:1056px;width:11px;height:11px;background:#ffee00;"></div>
<div style="left:567px;top:1057px;width:6px;height:10px;background:#9a9a9a;border-right:2px solid #777;"></div>
<div class="n" style="left:576px;top:1054px;height:15px;line-height:15px;width:26px;text-align:right;">17</div>
<div style="left:621px;top:1056px;width:11px;height:11px;background:#ffee00;"></div>
<div style="left:637px;top:1057px;width:6px;height:10px;background:#9a9a9a;border-right:2px solid #777;"></div>
<div class="n" style="left:646px;top:1054px;height:15px;line-height:15px;width:26px;text-align:right;">17</div>
<div style="left:691px;top:1056px;width:11px;height:11px;background:#dcdcdc;"></div>
<div class="n" style="left:718px;top:1054px;height:15px;line-height:15px;width:20px;text-align:center;">--</div>
<div style="left:756px;top:1056px;width:11px;height:11px;background:#dcdcdc;"></div>
<div class="n" style="left:783px;top:1054px;height:15px;line-height:15px;width:20px;text-align:center;">--</div>
<div style="left:821px;top:1056px;width:11px;height:11px;background:#ccffff;"></div>
<div class="n" style="left:846px;top:1054px;height:15px;line-height:15px;width:20px;text-align:center;">1</div>
<div style="left:886px;top:1056px;width:11px;height:11px;background:#ccffff;"></div>
<div class="n" style="left:911px;top:1054px;height:15px;line-height:15px;width:20px;text-align:center;">1</div>
<div class="n" style="left:946px;top:1054px;height:15px;line-height:15px;width:76px;text-align:right;">0.940000</div>
<div class="n" style="left:1026px;top:1054px;height:15px;line-height:15px;width:75.5px;text-align:right;">0.105</div>
<div class="n" style="left:1106px;top:1054px;height:15px;line-height:15px;width:75.5px;text-align:right;">0.263</div>
<div class="t" style="left:1186px;top:1054px;height:15px;line-height:15px;width:80px;text-align:center;letter-spacing:-0.7px;">|| Y</div>
<div class="t" style="left:1356px;top:1054px;height:15px;line-height:15px;letter-spacing:-0.85px;">BL_L100</div>
<div id="dlg" style="left:710px;top:32px;width:997px;height:842px;background:#d3d2d8;border-radius:8px;overflow:hidden;box-shadow:0 0 0 1px rgba(50,52,60,.9),0 10px 34px 6px rgba(0,0,0,.38);"></div>
<div style="left:710px;top:32px;width:997px;height:30px;background:#faf0f1;border-radius:8px 8px 0 0;"></div>
<div class="t" style="left:739px;top:38px;height:18px;line-height:18px;font-size:12px;color:#000;">Edytuj pręty</div>
<div style="left:710px;top:832px;width:997px;height:42px;background:#ffffff;border-radius:0 0 8px 8px;"></div>
<div style="left:719px;top:71px;width:320px;height:47px;background:#fff;"></div>
<div style="left:1049px;top:71px;width:320px;height:47px;background:#fff;"></div>
<div style="left:1379px;top:71px;width:319px;height:47px;background:#fff;"></div>
<div class="b" style="left:724px;top:72px;height:16px;line-height:16px;">Pręt nr</div>
<div class="b" style="left:1384px;top:72px;height:16px;line-height:16px;">Przypisane do linii nr</div>
<div style="left:724px;top:93px;width:310px;height:20px;background:#e6e6e6;"></div>
<div style="left:1384px;top:93px;width:314px;height:20px;background:#e6e6e6;overflow:hidden;"></div>
<div class="n" style="left:727px;top:94px;height:19px;line-height:19px;">445-447,449-452,454,456-463</div>
<div class="n" style="left:1387px;top:94px;height:19px;line-height:19px;width:311px;overflow:hidden;">1174,1184,1190,1195,1202,1214,1233,1264,1271,1272,1283,1284,1290</div>
<div style="left:719px;top:129px;width:979px;height:22px;background:#e4e4e4;"></div>
<div style="left:719px;top:151px;width:979px;height:673px;background:#ececec;"></div>
<div style="left:780px;top:130px;width:1px;height:21px;background:#dadada;"></div>
<div class="t" style="left:719px;top:132px;height:17px;line-height:17px;width:61px;text-align:center;">Główne</div>
<div style="left:780px;top:129px;width:63px;height:23px;background:#ececec;"></div>
<div class="t" style="left:780px;top:132px;height:17px;line-height:17px;width:63px;text-align:center;">Żebro</div>
<div style="left:902px;top:130px;width:1px;height:21px;background:#dadada;"></div>
<div class="t" style="left:843px;top:132px;height:17px;line-height:17px;width:59px;text-align:center;">Przekrój</div>
<div style="left:976px;top:130px;width:1px;height:21px;background:#dadada;"></div>
<div class="t" style="left:902px;top:132px;height:17px;line-height:17px;width:74px;text-align:center;">Mimośrody</div>
<div style="left:1076px;top:130px;width:1px;height:21px;background:#dadada;"></div>
<div class="t" style="left:976px;top:132px;height:17px;line-height:17px;width:100px;text-align:center;">Effective lengths</div>
<div style="left:1187px;top:130px;width:1px;height:21px;background:#dadada;"></div>
<div class="t" style="left:1076px;top:132px;height:17px;line-height:17px;width:111px;text-align:center;">Otulina betonowa</div>
<div style="left:1313px;top:130px;width:1px;height:21px;background:#dadada;"></div>
<div class="t" style="left:1187px;top:132px;height:17px;line-height:17px;width:126px;text-align:center;">Zbrojenie na ścinanie</div>
<div style="left:1430px;top:130px;width:1px;height:21px;background:#dadada;"></div>
<div class="t" style="left:1313px;top:132px;height:17px;line-height:17px;width:117px;text-align:center;">Zbrojenie podłużne</div>
<div class="t" style="left:1430px;top:132px;height:17px;line-height:17px;width:128px;text-align:center;">Konfiguracje obliczeń</div>
<div class="t" style="left:1558px;top:132px;height:17px;line-height:17px;width:109px;overflow:hidden;padding-left:9px;">Podpory obliczeniowe</div>
<svg width="1714" height="1065" style="pointer-events:none"><polygon points="1678,134 1678,144 1672,139" fill="#a8a8a8"/><polygon points="1687,133 1687,145 1694,139" fill="#000"/></svg>
<div style="left:728px;top:159px;width:227px;height:242px;background:#fff;"></div>
<div style="left:965px;top:159px;width:294px;height:242px;background:#fff;"></div>
<div style="left:1269px;top:159px;width:420px;height:242px;background:#fff;"></div>
<div class="b" style="left:733px;top:160px;height:16px;line-height:16px;">Przypisanie</div>
<div class="b" style="left:970px;top:160px;height:16px;line-height:16px;">Opcje</div>
<div class="t" style="left:733px;top:186px;height:16px;line-height:16px;">Wyrównanie żebra</div>
<div style="left:733px;top:205px;width:217px;height:21px;background:#e5e5f0;"></div>
<div class="t" style="left:738px;top:207px;height:17px;line-height:17px;letter-spacing:-0.1px;">Zdef. przez użytkownika za pomocą ...</div>
<div class="t" style="left:733px;top:242px;height:16px;line-height:16px;">1. powierzchnia nr</div>
<div style="left:733px;top:261px;width:187px;height:21px;background:#e5e5f0;"></div>
<div class="n" style="left:736px;top:263px;height:17px;line-height:17px;">315</div>
<div style="left:925px;top:261px;width:25px;height:21px;background:#cce4f7;"></div>
<div class="t" style="left:733px;top:298px;height:16px;line-height:16px;">2. powierzchnia nr</div>
<div style="left:733px;top:317px;width:187px;height:21px;background:#e5e5f0;"></div>
<div style="left:925px;top:317px;width:25px;height:21px;background:#cce4f7;"></div>
<div style="left:970px;top:189px;width:13px;height:13px;background:#fff;border-radius:3px;border:1px solid #5a5a5a;"></div>
<div style="left:970px;top:211px;width:13px;height:13px;background:#0a5ec2;border-radius:3px;"><svg width="13" height="13" viewBox="0 0 13 13"><path d="M3.2 6.6 L5.5 8.9 L9.8 4.2" fill="none" stroke="#fff" stroke-width="1.2"/></svg></div>
<div style="left:970px;top:245px;width:13px;height:13px;background:#fff;border-radius:3px;border:1px solid #5a5a5a;"></div>
<div class="t" style="left:989px;top:188px;height:16px;line-height:16px;letter-spacing:0.08px;">Autowykrywanie</div>
<div class="t" style="left:989px;top:210px;height:16px;line-height:16px;">Wyrównaj lokalną oś z z lokalną osią z powierzchni</div>
<div class="t" style="left:989px;top:244px;height:16px;line-height:16px;letter-spacing:-0.17px;">Połączenie ścinane między środnikiem i pasem</div>
<div class="t" style="left:990px;top:264px;height:16px;line-height:16px;letter-spacing:-0.1px;">Klasyfikacja szorstkości powierzchni</div>
<div style="left:990px;top:283px;width:264px;height:21px;background:#e6e6e6;"></div>
<div class="t" style="left:990px;top:320px;height:16px;line-height:16px;letter-spacing:-0.14px;">Redukcja szerokości połączenia</div>
<div style="left:990px;top:339px;width:90px;height:20px;background:#e6e6e6;"></div>
<div class="t" style="left:1085px;top:341px;height:16px;line-height:16px;font-size:11px;color:#747474;">[mm]</div>
<div style="left:1274px;top:376px;width:25px;height:21px;background:#cce4f7;"></div>
<div style="left:728px;top:411px;width:961px;height:170px;background:#fff;"></div>
<div class="b" style="left:733px;top:412px;height:16px;line-height:16px;">Wymiary pasa</div>
<div style="left:1631px;top:556px;width:24px;height:21px;background:#e1e1e1;"></div>
<div style="left:1659px;top:556px;width:24px;height:21px;background:#e1e1e1;"></div>
<div class="t" style="left:1631px;top:556px;height:21px;line-height:21px;font-size:17px;color:#8a8a8a;width:24px;text-align:center;font-weight:bold;">=</div>
<div class="t" style="left:1659px;top:556px;height:21px;line-height:21px;font-size:15px;color:#8a8a8a;width:24px;text-align:center;">%</div>
<div style="left:728px;top:591px;width:961px;height:225px;background:#fff;"></div>
<div class="t" style="left:733px;top:594px;height:16px;line-height:16px;">Pręt nr</div>
<div style="left:733px;top:611px;width:80px;height:21px;background:#e5e5f0;"></div>
<div class="n" style="left:737px;top:612px;height:18px;line-height:18px;">446</div>
<div style="left:818px;top:591px;width:824px;height:225px;background:#222831;"></div>
<div style="left:1183px;top:611px;width:92px;height:74px;background:#595b61;"></div>
<svg width="1714" height="1065"><g fill="none" stroke="#e27c68" stroke-width="1.8"><rect x="1183" y="623.3" width="92" height="47.7"/><line x1="1229" y1="623" x2="1229" y2="671"/></g><rect x="1180.5" y="646" width="2" height="3" fill="#e02020"/><line x1="1231" y1="647.5" x2="1258" y2="647.5" stroke="#f5a9a0" stroke-width="1.8"/><polygon points="1256,645.5 1262,647.5 1256,649.5" fill="#f5a9a0"/><line x1="1231" y1="649" x2="1231" y2="676" stroke="#7fdcf8" stroke-width="2.2"/><rect x="1230" y="646" width="2.5" height="2.5" fill="#40c040"/><polygon points="1229,674 1233,674 1231,680" fill="#3a8fd0"/><g stroke="#b4b4b4" stroke-width="1"><line x1="1182.5" y1="712" x2="1182.5" y2="793"/><line x1="1274.5" y1="712" x2="1274.5" y2="793"/><line x1="1183" y1="787.5" x2="1205" y2="787.5"/><line x1="1252" y1="787.5" x2="1274" y2="787.5"/></g><polygon points="1183,787.5 1191,785 1191,790" fill="#a8a8a8"/><polygon points="1274,787.5 1266,785 1266,790" fill="#a8a8a8"/><text x="1228" y="791.5" font-size="11" fill="#888a8e" text-anchor="middle" font-family="Liberation Sans, sans-serif">0.400 m</text><text x="1268" y="651.5" font-size="10.5" fill="#b5493a" font-family="Liberation Sans, sans-serif">x</text><text x="1226" y="693.5" font-size="10" fill="#3f78b5" font-family="Liberation Sans, sans-serif">z'</text></svg>
<svg width="1714" height="1065"><rect x="1571" y="612" width="49" height="49" rx="3" fill="#3f4043"/><g fill="#bdbec2"><rect x="1574" y="615" width="9" height="8"/><rect x="1587" y="615" width="18" height="8"/><rect x="1609" y="615" width="8" height="8"/><rect x="1574" y="627" width="9" height="19"/><rect x="1587" y="627" width="18" height="19"/><rect x="1609" y="627" width="8" height="19"/><rect x="1574" y="650" width="9" height="8"/><rect x="1587" y="650" width="18" height="8"/><rect x="1609" y="650" width="8" height="8"/></g><text x="1596" y="642" font-size="10" font-weight="bold" fill="#4a9a4a" text-anchor="middle" font-family="Liberation Sans, sans-serif">+y</text></svg>
<div style="left:1647px;top:602px;width:37px;height:21px;background:#cce4f7;"></div>
<svg width="1714" height="1065"><polygon points="1673,610 1681,610 1677,614.5" fill="#000"/></svg>
<div style="left:1647px;top:626px;width:37px;height:21px;background:#cce4f7;"></div>
<svg width="1714" height="1065"><polygon points="1673,634 1681,634 1677,638.5" fill="#000"/></svg>
<div style="left:1647px;top:650px;width:37px;height:21px;background:#cce4f7;"></div>
<svg width="1714" height="1065"><polygon points="1673,658 1681,658 1677,662.5" fill="#000"/></svg>
<div style="left:1647px;top:674px;width:37px;height:21px;background:#cce4f7;"></div>
<svg width="1714" height="1065"><polygon points="1673,682 1681,682 1677,686.5" fill="#000"/></svg>
<div style="left:1647px;top:736px;width:37px;height:21px;background:#cce4f7;"></div>
<svg width="1714" height="1065"><polygon points="1673,744 1681,744 1677,748.5" fill="#000"/></svg>
<div style="left:1647px;top:712px;width:25px;height:21px;background:#cce4f7;"></div>
<div style="left:1647px;top:767px;width:25px;height:21px;background:#cce4f7;"></div>
<div style="left:1647px;top:791px;width:25px;height:21px;background:#cce4f7;"></div>
<!--RICONS-->
<div style="left:719px;top:842px;width:25px;height:21px;background:#cce4f7;"></div>
<div style="left:754px;top:842px;width:25px;height:21px;background:#cce4f7;"></div>
<div style="left:789px;top:842px;width:25px;height:21px;background:#cce4f7;"></div>
<div style="left:824px;top:842px;width:25px;height:21px;background:#cce4f7;"></div>
<div style="left:859px;top:842px;width:25px;height:21px;background:#cce4f7;"></div>
<div style="left:894px;top:842px;width:25px;height:21px;background:#cce4f7;"></div>
<!--FICONS-->
<div style="left:1434px;top:843px;width:81px;height:21px;background:#fdfdfd;border:1px solid #c6c6c6;border-radius:4px;"></div>
<div class="t" style="left:1434px;top:846px;height:17px;line-height:17px;font-size:12px;color:#000;width:81px;text-align:center;">OK</div>
<div style="left:1525px;top:843px;width:81px;height:21px;background:#fdfdfd;border:1px solid #c6c6c6;border-radius:4px;"></div>
<div class="t" style="left:1525px;top:846px;height:17px;line-height:17px;font-size:12px;color:#000;width:81px;text-align:center;">Anuluj</div>
<div style="left:1616px;top:843px;width:81px;height:21px;background:#fdfdfd;border:1px solid #c6c6c6;border-radius:4px;border-color:#dedede;background:#f9f9f9;"></div>
<div class="t" style="left:1616px;top:846px;height:17px;line-height:17px;font-size:12px;color:#8a8a8a;width:81px;text-align:center;">Zastosuj</div>
<svg width="1714" height="1065"><g fill="#a0a0a0"><rect x="1702" y="864" width="2" height="2"/><rect x="1699" y="867" width="2" height="2"/><rect x="1702" y="867" width="2" height="2"/><rect x="1696" y="870" width="2" height="2"/><rect x="1699" y="870" width="2" height="2"/><rect x="1702" y="870" width="2" height="2"/></g></svg>
<svg width="1714" height="1065"><line x1="1588" y1="46.5" x2="1598" y2="46.5" stroke="#c9c3c6" stroke-width="1"/><rect x="1633.5" y="41.5" width="9" height="9" rx="1" fill="none" stroke="#000" stroke-width="1.1"/><path d="M1679 41 L1689 51 M1689 41 L1679 51" stroke="#000" stroke-width="1.1" fill="none"/></svg>
<!--DICONS-->
<svg width="1714" height="1065" viewBox="0 0 1714 1065">
<g transform="translate(718,39)"><path d="M8 1 L16 5 L12 8 L5 4 Z" fill="#5c7fae"/><path d="M6 2.5 L13 6.5 M7 1.8 L14.5 5.8" stroke="#a9c4e4" stroke-width="0.7"/><circle cx="6.5" cy="10" r="5.3" fill="#f2c21a" stroke="#7a6a10" stroke-width="0.9"/><circle cx="5.8" cy="9.3" r="2.2" fill="#fff3a0"/><text x="6.5" y="13.5" font-size="8" font-weight="bold" fill="#5a4a00" text-anchor="middle" font-family="Liberation Sans, sans-serif">6</text><path d="M10 5.5 L13 9" stroke="#444" stroke-width="1"/></g>
<path d="M936.5 212.8 L941 217.4 L945.5 212.8" fill="none" stroke="#444" stroke-width="1.1"/>
<path d="M906.5 268.8 L911 273.4 L915.5 268.8" fill="none" stroke="#444" stroke-width="1.1"/>
<path d="M906.5 324.8 L911 329.4 L915.5 324.8" fill="none" stroke="#444" stroke-width="1.1"/>
<path d="M798.5 618.8 L803 623.4 L807.5 618.8" fill="none" stroke="#444" stroke-width="1.1"/>
<path d="M933 263 L939 269 M939 263 L933 269" stroke="#f01020" stroke-width="1.4" fill="none"/><g transform="translate(936.5,266.5)"><path d="M0 0 L0 10.924999999999999 L2.6449999999999996 8.625 L4.83 13.225 L6.669999999999999 12.42 L4.6 8.049999999999999 L8.049999999999999 8.049999999999999 Z" fill="#fff" stroke="#777" stroke-width="0.8"/></g>
<path d="M933 319 L939 325 M939 319 L933 325" stroke="#f01020" stroke-width="1.4" fill="none"/><g transform="translate(936.5,322.5)"><path d="M0 0 L0 10.924999999999999 L2.6449999999999996 8.625 L4.83 13.225 L6.669999999999999 12.42 L4.6 8.049999999999999 L8.049999999999999 8.049999999999999 Z" fill="#fff" stroke="#777" stroke-width="0.8"/></g>
<g fill="#9a9a9a"><polygon points="1059,347 1064,347 1061.5,344"/><polygon points="1059,351.5 1064,351.5 1061.5,354.5"/><polygon points="1072,345.5 1072,352.5 1076,349"/></g>
<g transform="translate(1278,378)"><rect x="0" y="0" width="7" height="6.5" fill="#2c4fd0"/><rect x="1.5" y="1.5" width="2.5" height="2.5" fill="#fff"/><rect x="7" y="9" width="8" height="7" fill="#4a6a9a"/><rect x="8.5" y="11" width="5" height="3" fill="#b8cce8"/><path d="M9 2 Q13.5 2 13.5 6.5" fill="none" stroke="#333" stroke-width="1.2"/><polygon points="11.5,6 15.5,6 13.5,9" fill="#333"/><path d="M6 14 Q2 14 2 10" fill="none" stroke="#333" stroke-width="1.2"/><polygon points="0,10.5 4,10.5 2,7.5" fill="#333"/></g>
<g transform="translate(722,844)"><circle cx="9.5" cy="7" r="6.5" fill="#555"/><path d="M5 11 L1.5 16 L9 13 Z" fill="#555"/><text x="9.5" y="11" font-size="11" font-weight="bold" fill="#fff" text-anchor="middle" font-family="Liberation Sans, sans-serif">?</text></g>
<g transform="translate(757.5,844)"><rect x="1" y="0" width="15" height="5" fill="#7fd06a"/><g stroke="#4fa040" stroke-width="0.8"><line x1="4" y1="2.5" x2="4" y2="5"/><line x1="7" y1="2.5" x2="7" y2="5"/><line x1="10" y1="2.5" x2="10" y2="5"/><line x1="13" y1="2.5" x2="13" y2="5"/></g><text x="0" y="14.5" font-size="10.5" fill="#000" font-family="Liberation Sans, sans-serif" letter-spacing="-0.7">0,</text><text x="7.2" y="14.5" font-size="10.5" fill="#2a5fd8" font-family="Liberation Sans, sans-serif" letter-spacing="-0.7">00</text><line x1="7.5" y1="16" x2="17" y2="16" stroke="#2a5fd8" stroke-width="1"/></g>
<g transform="translate(793,843.5)"><rect x="0" y="0" width="3.6" height="3.6" fill="#e02020"/><rect x="3.8" y="0" width="3.6" height="3.6" fill="#f0e020"/><rect x="0" y="3.8" width="3.6" height="3.6" fill="#20c020"/><rect x="3.8" y="3.8" width="3.6" height="3.6" fill="#3040e0"/><text x="0" y="16" font-size="10" font-weight="bold" fill="#000" font-family="Liberation Sans, sans-serif">A</text><rect x="7.5" y="5" width="9" height="7.5" fill="#f4f4f4" stroke="#777" stroke-width="0.8"/><rect x="7.5" y="5" width="9" height="2.4" fill="#2a3c9c"/><rect x="0" y="16" width="2" height="1.5" fill="#000"/><rect x="3" y="16" width="2" height="1.5" fill="#000"/><rect x="6" y="16" width="2" height="1.5" fill="#000"/></g>
<g transform="translate(828.5,845)"><rect x="0.5" y="0.5" width="15" height="11" fill="#d8e8f6" stroke="#8a8f96" stroke-width="1"/><path d="M2 6 Q8 -1 14 3 L11 10 Q8 5 4 8 Z" fill="#4a86c8"/><path d="M3.5 6.5 Q8 1 12.5 4.5 M5 8 Q8 4 11 7" stroke="#9cc4ea" stroke-width="0.7" fill="none"/><rect x="7.2" y="12" width="1.6" height="2.5" fill="#8a8f96"/><rect x="4" y="14.5" width="8" height="1.2" fill="#8a8f96"/></g>
<g transform="translate(862,844)"><rect x="1.5" y="7.5" width="6" height="8" fill="#fff" stroke="#333" stroke-width="1"/><line x1="3" y1="10.5" x2="6" y2="10.5" stroke="#333" stroke-width="1"/><line x1="3" y1="12.5" x2="6" y2="12.5" stroke="#333" stroke-width="1"/></g><path d="M866.7 843.7 L872.3 849.3 M872.3 843.7 L866.7 849.3" stroke="#f01020" stroke-width="1.4" fill="none"/><g transform="translate(870,847.5)"><path d="M0 0 L0 9.025 L2.1849999999999996 7.125 L3.9899999999999998 10.924999999999999 L5.51 10.26 L3.8 6.6499999999999995 L6.6499999999999995 6.6499999999999995 Z" fill="#fff" stroke="#777" stroke-width="0.8"/></g>
<text x="898" y="859" font-size="17" font-style="italic"  fill="#111" font-family="Liberation Serif, serif" letter-spacing="-1.5">fx</text><g transform="translate(906.5,844)"><path d="M0 3 Q4.0 -2 8 3 Q4.0 7 0 3 Z" fill="#3a3cb8"/><circle cx="4.0" cy="3" r="1.6" fill="#fff"/><circle cx="4.0" cy="3" r="0.9" fill="#101050"/></g>
<g transform="translate(1650,604)"><path d="M1 5 L6 1.5 L16 1.5 L16 12 L11 16 L1 16 Z" fill="#cfd3e6" stroke="#8f94b0" stroke-width="0.8"/><path d="M1 5 H11 V16 M11 5 L16 1.5" fill="none" stroke="#8f94b0" stroke-width="0.8"/><path d="M6 1.5 V12 H16 M6 12 L1 16" fill="none" stroke="#b4b8d0" stroke-width="0.6"/></g>
<g transform="translate(1650,628)"><line x1="3" y1="3.5" x2="12" y2="3.5" stroke="#d04020" stroke-width="1.2"/><polygon points="0.5,3.5 4,1.5 4,5.5" fill="#d04020"/><line x1="12" y1="3.5" x2="12" y2="13" stroke="#2040d0" stroke-width="1.2"/><polygon points="12,16 10,12.5 14,12.5" fill="#2040d0"/><circle cx="12" cy="3.5" r="1.8" fill="#e8e020" stroke="#40a040" stroke-width="0.6"/><text x="0.5" y="15" font-size="11" font-weight="bold" fill="#111" font-family="Liberation Sans, sans-serif">y</text></g>
<g transform="translate(1650,652)"><path d="M1 6 L4 2 H9 V6 H16 L16 13 L13 16 H1 Z" fill="#9fb0c8" stroke="#7f90a8" stroke-width="0.6"/><path d="M1 6 H7 V10 H13 V16 M7 6 L9 2 M13 10 L16 6" fill="none" stroke="#c9d6e8" stroke-width="0.8"/><path d="M1 6 H7 V10 H13 V16 H1 Z" fill="#b8c6dc"/></g>
<path d="M1647.5 695 V674.5 H1668" fill="none" stroke="#1a5fb4" stroke-width="1"/><line x1="1647" y1="694.5" x2="1668" y2="694.5" stroke="#1a5fb4" stroke-width="1"/>
<g transform="translate(1650,676)"><path d="M1 11 L12 1 H16 V3 L7 11 Z" fill="#b0b0b8"/><g stroke="#4a4ad0" stroke-width="1"><line x1="4" y1="11" x2="13" y2="2.5"/><line x1="8" y1="11" x2="16" y2="3.5"/><line x1="12" y1="11" x2="16" y2="7"/></g><rect x="0.5" y="11" width="16" height="5" fill="#c8c8c8" stroke="#888" stroke-width="0.7"/><g fill="#3a3ac0"><rect x="3" y="13" width="1.5" height="1.5"/><rect x="7.5" y="13" width="1.5" height="1.5"/><rect x="12" y="13" width="1.5" height="1.5"/></g></g>
<g transform="translate(1651,717)"><path d="M2 3 Q8.5 13 15 3" fill="none" stroke="#7fa8d8" stroke-width="2.4"/><path d="M2 3 Q8.5 13 15 3" fill="none" stroke="#dbe9f8" stroke-width="0.9"/><circle cx="2" cy="3" r="1.6" fill="#e01818"/><circle cx="15" cy="3" r="1.6" fill="#e01818"/></g>
<g transform="translate(1650,738)"><rect x="3.5" y="0.5" width="9" height="4" fill="#444" /><rect x="0" y="5" width="16" height="8" rx="1" fill="#555"/><rect x="12.5" y="6.5" width="2" height="1.2" fill="#fff"/><rect x="3.5" y="9.5" width="9" height="7" fill="#fff" stroke="#444" stroke-width="1"/><line x1="5.5" y1="12" x2="10.5" y2="12" stroke="#444"/><line x1="5.5" y1="14.2" x2="10.5" y2="14.2" stroke="#444"/></g>
<g transform="translate(1651,769)"><g stroke="#1a1a9a" stroke-width="1.2"><line x1="2" y1="1.5" x2="14" y2="1.5"/><line x1="1" y1="12.5" x2="15" y2="12.5"/><line x1="3" y1="15" x2="13" y2="15"/><line x1="5" y1="17.5" x2="11" y2="17.5"/></g><rect x="1" y="7" width="13" height="3.2" fill="#b4b4b4"/><path d="M3 6 Q6 2.5 10 3.5 L12 6 Q10 9 6 8.5 Z" fill="#e8c8a8" stroke="#a07858" stroke-width="0.6"/><path d="M10 3.5 L14.5 3 L15.5 7 L12 6.5 Z" fill="#4a7ac8"/></g>
<g transform="translate(1651,793)"><circle cx="6" cy="8.5" r="4.3" fill="none" stroke="#555" stroke-width="1.7"/><line x1="9" y1="11.7" x2="14.5" y2="17" stroke="#555" stroke-width="2"/><path d="M8.5 1.5 L16 9 M16 1.5 L8.5 9" stroke="#e81010" stroke-width="2.4"/></g>
<g transform="translate(0,957)"><rect x="0" y="0.5" width="11.5" height="13" fill="#f4f4f4" stroke="#555" stroke-width="1"/><rect x="0" y="0" width="12" height="2.5" fill="#3a3a9a"/><g stroke="#999" stroke-width="0.7"><line x1="0" y1="5.5" x2="11" y2="5.5"/><line x1="0" y1="9" x2="11" y2="9"/><line x1="4" y1="3" x2="4" y2="13"/></g><path d="M2 12.5 L10.5 4 V12.5 Z" fill="#8fdc70" stroke="#3a8a2a" stroke-width="0.8"/></g>
<path d="M179.5 962.3 L184 966.9 L188.5 962.3" fill="none" stroke="#444" stroke-width="1.1"/>
<path d="M491.5 962.3 L496 966.9 L500.5 962.3" fill="none" stroke="#444" stroke-width="1.1"/>
<polygon points="203.5,960.5 199,964.5 203.5,968.5" fill="#333"/>
<polygon points="216,960.5 220.5,964.5 216,968.5" fill="#000"/>
<polygon points="516.0,960.5 511.5,964.5 516.0,968.5" fill="#333"/>
<polygon points="528.5,960.5 533.0,964.5 528.5,968.5" fill="#000"/>
<g transform="translate(241,958)"><line x1="2" y1="12" x2="12" y2="2" stroke="#9ab4d8" stroke-width="2.2"/><circle cx="2" cy="12" r="1.3" fill="#e01818"/><circle cx="12" cy="2" r="1.3" fill="#e01818"/><path d="M10.5 9.5 H14.5 M12.5 9.5 V13.5 M10.5 13.5 H14.5" stroke="#444" stroke-width="1" fill="none"/></g>
<line x1="541.5" y1="956" x2="541.5" y2="974" stroke="#8a8a8a" stroke-width="1"/>
<line x1="600.5" y1="956" x2="600.5" y2="974" stroke="#8a8a8a" stroke-width="1"/>
<line x1="737.5" y1="956" x2="737.5" y2="974" stroke="#8a8a8a" stroke-width="1"/>
<line x1="770.5" y1="956" x2="770.5" y2="974" stroke="#8a8a8a" stroke-width="1"/>
<line x1="881.5" y1="956" x2="881.5" y2="974" stroke="#8a8a8a" stroke-width="1"/>
<line x1="914.5" y1="956" x2="914.5" y2="974" stroke="#8a8a8a" stroke-width="1"/>
<line x1="1025.5" y1="956" x2="1025.5" y2="974" stroke="#8a8a8a" stroke-width="1"/>
<line x1="1110.5" y1="956" x2="1110.5" y2="974" stroke="#8a8a8a" stroke-width="1"/>
<line x1="1172.5" y1="956" x2="1172.5" y2="974" stroke="#8a8a8a" stroke-width="1"/>
<line x1="1141.5" y1="952" x2="1141.5" y2="978" stroke="#dcdcdc" stroke-width="1"/>
<line x1="1203.5" y1="952" x2="1203.5" y2="978" stroke="#dcdcdc" stroke-width="1"/>
<rect x="546.5" y="953.5" width="23.5" height="22" rx="2.5" fill="#cce8ff" stroke="#99d1ff" stroke-width="1"/>
<rect x="573.0" y="953.5" width="23.5" height="22" rx="2.5" fill="#cce8ff" stroke="#99d1ff" stroke-width="1"/>
<rect x="886.5" y="953.5" width="24" height="22" rx="2.5" fill="#cce8ff" stroke="#99d1ff" stroke-width="1"/>
<g transform="translate(554,957)"><rect x="0.5" y="0.5" width="8" height="5.5" fill="#e8e8e8" stroke="#666" stroke-width="1"/><path d="M7 6 Q13 8 9 15" fill="none" stroke="#2a6cb0" stroke-width="1.6"/><polygon points="5.5,6.5 10.5,5 9.5,10" fill="#2a6cb0"/></g>
<g transform="translate(576,957)"><rect x="6.5" y="0.5" width="8" height="5.5" fill="#e8e8e8" stroke="#666" stroke-width="1"/><path d="M8 4 Q1 8 5 14" fill="none" stroke="#2a6cb0" stroke-width="1.6"/><polygon points="2,12 8,12.5 5,17" fill="#2a6cb0"/></g>
<g transform="translate(608,956.5)"><rect x="0.5" y="0.5" width="17" height="17" fill="#cfcfcf" stroke="#8c8c8c" stroke-width="1"/><g stroke="#a8a8a8" stroke-width="1"><line x1="6.5" y1="1" x2="6.5" y2="17"/><line x1="11.5" y1="1" x2="11.5" y2="17"/><line x1="1" y1="5.5" x2="17" y2="5.5"/><line x1="1" y1="9.5" x2="17" y2="9.5"/><line x1="1" y1="13.5" x2="17" y2="13.5"/></g><rect x="1" y="1" width="16" height="3" fill="#bcbcbc"/></g>
<g transform="translate(634,956.5)"><rect x="0.5" y="7.5" width="17" height="10" fill="#fffbb0" stroke="#444" stroke-width="1"/><rect x="1" y="8" width="16" height="2.6" fill="#cfcfcf"/><g stroke="#c8c060" stroke-width="0.8"><line x1="6" y1="10" x2="6" y2="17"/><line x1="12" y1="10" x2="12" y2="17"/><line x1="1" y1="13.5" x2="17" y2="13.5"/></g><line x1="3.5" y1="1.5" x2="14.5" y2="4.5" stroke="#e8c400" stroke-width="1.4"/><circle cx="3.5" cy="1.5" r="1.6" fill="#f2d000"/><circle cx="14.5" cy="4.5" r="1.6" fill="#f2d000"/></g>
<g transform="translate(660,956.5)"><rect x="0.5" y="0.5" width="17" height="17" fill="#d6d6d6" stroke="#8c8c8c" stroke-width="1"/><g stroke="#bdbdbd" stroke-width="0.8"><line x1="6" y1="1" x2="6" y2="17"/><line x1="12" y1="1" x2="12" y2="17"/><line x1="1" y1="5" x2="17" y2="5"/><line x1="1" y1="9" x2="17" y2="9"/><line x1="1" y1="13" x2="17" y2="13"/></g><path d="M7 3 H11 V7 H15 V11 H11 V15 H7 V11 H3 V7 H7 Z" fill="#a9a9a9"/></g>
<g transform="translate(686,956.5)"><rect x="0.5" y="0.5" width="17" height="17" fill="#d6d6d6" stroke="#8c8c8c" stroke-width="1"/><g stroke="#bdbdbd" stroke-width="0.8"><line x1="6" y1="1" x2="6" y2="17"/><line x1="12" y1="1" x2="12" y2="17"/><line x1="1" y1="5" x2="17" y2="5"/><line x1="1" y1="9" x2="17" y2="9"/><line x1="1" y1="13" x2="17" y2="13"/></g><path d="M4 6.5 L6.5 4 L9 6.5 L11.5 4 L14 6.5 L11.5 9 L14 11.5 L11.5 14 L9 11.5 L6.5 14 L4 11.5 L6.5 9 Z" fill="#a9a9a9"/></g>
<g transform="translate(712,956.5)"><rect x="0.5" y="0.5" width="17" height="17" fill="#d6d6d6" stroke="#8c8c8c" stroke-width="1"/><g stroke="#bdbdbd" stroke-width="0.8"><line x1="6" y1="1" x2="6" y2="17"/><line x1="12" y1="1" x2="12" y2="17"/><line x1="1" y1="5" x2="17" y2="5"/><line x1="1" y1="9" x2="17" y2="9"/><line x1="1" y1="13" x2="17" y2="13"/></g><circle cx="9" cy="5" r="2.6" fill="#a9a9a9"/><circle cx="9" cy="12.5" r="2.6" fill="#a9a9a9"/></g>
<g transform="translate(745,956.5)"><rect x="0.5" y="0.5" width="17" height="17" fill="#d6d6d6" stroke="#8c8c8c" stroke-width="1"/><g stroke="#bdbdbd" stroke-width="0.8"><line x1="6" y1="1" x2="6" y2="17"/><line x1="12" y1="1" x2="12" y2="17"/><line x1="1" y1="5" x2="17" y2="5"/><line x1="1" y1="9" x2="17" y2="9"/><line x1="1" y1="13" x2="17" y2="13"/></g><path d="M3 3 L15 15 M15 3 L3 15" stroke="#8f8f8f" stroke-width="3.2"/></g>
<g transform="translate(778,956.5)"><rect x="0.5" y="0.5" width="8" height="4" fill="#fff" stroke="#d0d0d0"/><rect x="1" y="6" width="8" height="5" fill="#a0a0a0"/><rect x="1" y="12" width="8" height="5" fill="#a0a0a0"/><path d="M10 9 H13.5 A2.6 2.6 0 0 1 13.5 14.5 H11" fill="none" stroke="#a0a0a0" stroke-width="1.6"/><polygon points="12,12.3 12,16.7 9.5,14.5" fill="#a0a0a0"/></g>
<g transform="translate(804,956.5)"><rect x="0.5" y="0.5" width="8" height="4" fill="#fff" stroke="#d0d0d0"/><rect x="1" y="6" width="8" height="5.5" fill="#a0a0a0"/><rect x="0.5" y="13" width="8" height="4" fill="#fff" stroke="#d0d0d0"/><path d="M10.5 5 L17 12 M17 5 L10.5 12" stroke="#a0a0a0" stroke-width="1.6"/></g>
<g transform="translate(830,956.5)"><g fill="#fff" stroke="#d4d4d4"><rect x="0.5" y="0.5" width="6" height="4"/><rect x="0.5" y="13" width="6" height="4"/></g><line x1="8" y1="7" x2="17" y2="7" stroke="#d0d0d0"/><line x1="8" y1="11" x2="17" y2="11" stroke="#d0d0d0"/><path d="M1 9 L6 5 V7.7 H12 V10.3 H6 V13 Z" fill="#a0a0a0"/></g>
<g transform="translate(856,956.5)"><g fill="#fff" stroke="#d4d4d4"><rect x="0.5" y="0.5" width="7" height="4"/><rect x="0.5" y="6.5" width="7" height="4"/><rect x="0.5" y="13" width="7" height="4"/></g><path d="M17 9 L12 5 V7.7 H6 V10.3 H12 V13 Z" fill="#a0a0a0"/></g>
<g transform="translate(890,957.5)"><rect x="0.5" y="0.5" width="17" height="16" fill="#cfe4fb" stroke="#444" stroke-width="1.2"/><rect x="1.2" y="1.2" width="15.6" height="6" fill="#c8c4ee"/><g stroke="#fff" stroke-width="0.7"><line x1="6" y1="1" x2="6" y2="7"/><line x1="12" y1="1" x2="12" y2="7"/><line x1="1" y1="4" x2="17" y2="4"/></g></g>
<g transform="translate(922,956)"><rect x="8.5" y="0.5" width="9" height="7.5" fill="#f4f4f4" stroke="#777" stroke-width="0.8"/><rect x="8.5" y="0.5" width="9" height="2.6" fill="#2a3c9c"/><text x="0" y="17" font-size="11" font-style="italic" font-weight="bold" fill="#000" font-family="Liberation Serif, serif" letter-spacing="-0.5">ab</text><line x1="12" y1="13" x2="17" y2="13" stroke="#000" stroke-width="1"/><line x1="12" y1="15.5" x2="17" y2="15.5" stroke="#000" stroke-width="1"/></g>
<text x="949" y="971" font-size="18" font-style="italic"  fill="#777" font-family="Liberation Serif, serif" letter-spacing="-1.5">fx</text>
<text x="973" y="971" font-size="18" font-style="italic"  fill="#8a8a8a" font-family="Liberation Serif, serif" letter-spacing="-1.5">fx</text>
<path d="M983 957 L991 965 M991 957 L983 965" stroke="#9a9a9a" stroke-width="2.6"/>
<text x="1000" y="972" font-size="18" font-style="italic" font-weight="bold" fill="#000" font-family="Liberation Serif, serif" letter-spacing="-1.5">fx</text>
<g transform="translate(1008,955)"><path d="M0 3 Q4.5 -2 9 3 Q4.5 7 0 3 Z" fill="#3a3cb8"/><circle cx="4.5" cy="3" r="1.6" fill="#fff"/><circle cx="4.5" cy="3" r="0.9" fill="#101050"/></g>
<g transform="translate(1033,956)"><path d="M3.5 0.5 H14 L17.5 4 V17.5 H3.5 Z" fill="#fff" stroke="#8a8a8a" stroke-width="1"/><path d="M14 0.5 V4 H17.5" fill="none" stroke="#8a8a8a"/><rect x="0" y="3.5" width="14" height="9" fill="#5aa860"/><text x="1" y="11.2" font-size="9" font-weight="bold" fill="#fff" font-family="Liberation Sans, sans-serif">X</text><g stroke="#fff" stroke-width="0.8"><rect x="7.5" y="5" width="8" height="6" fill="#5aa860"/><line x1="7.5" y1="7" x2="15.5" y2="7"/><line x1="7.5" y1="9" x2="15.5" y2="9"/><line x1="10.2" y1="5" x2="10.2" y2="11"/><line x1="12.9" y1="5" x2="12.9" y2="11"/></g><polygon points="8,13.5 13,13.5 10.5,16.3" fill="#5aa860"/></g>
<g transform="translate(1059,956)"><path d="M3.5 0.5 H14 L17.5 4 V17.5 H3.5 Z" fill="#fff" stroke="#8a8a8a" stroke-width="1"/><path d="M14 0.5 V4 H17.5" fill="none" stroke="#8a8a8a"/><rect x="0" y="3.5" width="14" height="9" fill="#5aa860"/><text x="1" y="11.2" font-size="9" font-weight="bold" fill="#fff" font-family="Liberation Sans, sans-serif">X</text><g stroke="#fff" stroke-width="0.8"><rect x="7.5" y="5" width="8" height="6" fill="#5aa860"/><line x1="7.5" y1="7" x2="15.5" y2="7"/><line x1="7.5" y1="9" x2="15.5" y2="9"/><line x1="10.2" y1="5" x2="10.2" y2="11"/><line x1="12.9" y1="5" x2="12.9" y2="11"/></g><polygon points="8,16.3 13,16.3 10.5,13.5" fill="#5aa860"/></g>
<g transform="translate(1085,956)"><path d="M3.5 0.5 H14 L17.5 4 V17.5 H3.5 Z" fill="#fff" stroke="#8a8a8a" stroke-width="1"/><path d="M14 0.5 V4 H17.5" fill="none" stroke="#8a8a8a"/><rect x="0" y="3.5" width="14" height="9" fill="#5aa860"/><text x="1" y="11.2" font-size="9" font-weight="bold" fill="#fff" font-family="Liberation Sans, sans-serif">X</text><g stroke="#fff" stroke-width="0.8"><rect x="7.5" y="5" width="8" height="6" fill="#5aa860"/><line x1="7.5" y1="7" x2="15.5" y2="7"/><line x1="7.5" y1="9" x2="15.5" y2="9"/><line x1="10.2" y1="5" x2="10.2" y2="11"/><line x1="12.9" y1="5" x2="12.9" y2="11"/></g><circle cx="13.5" cy="14" r="3.4" fill="#555"/><circle cx="13.5" cy="14" r="1.4" fill="#fff"/><g stroke="#555" stroke-width="1.6"><line x1="13.5" y1="9.5" x2="13.5" y2="18.5"/><line x1="9" y1="14" x2="18" y2="14"/><line x1="10.3" y1="10.8" x2="16.7" y2="17.2"/><line x1="16.7" y1="10.8" x2="10.3" y2="17.2"/></g><circle cx="13.5" cy="14" r="2.6" fill="#555"/><circle cx="13.5" cy="14" r="1.3" fill="#fff"/></g>
<g transform="translate(1118,956)"><path d="M1 6 L6 2 L11 4 L14 0.5 L17 3 V6 Z" fill="#c9c9c9" stroke="#b0b0b0" stroke-width="0.6"/><rect x="0.5" y="6.5" width="17" height="11" fill="#c4c4c4" stroke="#a8a8a8"/><g stroke="#e8e8e8" stroke-width="1.2"><line x1="2.5" y1="10" x2="8" y2="10"/><line x1="10" y1="10" x2="15.5" y2="10"/><line x1="2.5" y1="13.5" x2="8" y2="13.5"/><line x1="10" y1="13.5" x2="15.5" y2="13.5"/></g></g>
<g transform="translate(1146.5,956)"><rect x="1" y="0" width="15" height="5" fill="#7fd06a"/><g stroke="#4fa040" stroke-width="0.8"><line x1="4" y1="2.5" x2="4" y2="5"/><line x1="7" y1="2.5" x2="7" y2="5"/><line x1="10" y1="2.5" x2="10" y2="5"/><line x1="13" y1="2.5" x2="13" y2="5"/></g><text x="0" y="14.5" font-size="10.5" fill="#000" font-family="Liberation Sans, sans-serif" letter-spacing="-0.7">0,</text><text x="7.2" y="14.5" font-size="10.5" fill="#2a5fd8" font-family="Liberation Sans, sans-serif" letter-spacing="-0.7">00</text><line x1="7.5" y1="16" x2="17" y2="16" stroke="#2a5fd8" stroke-width="1"/></g>
<g transform="translate(1180,957)"><circle cx="9.5" cy="7" r="6.5" fill="#444"/><path d="M5 11 L1.5 16 L9 13 Z" fill="#444"/><text x="9.5" y="11" font-size="11" font-weight="bold" fill="#fff" text-anchor="middle" font-family="Liberation Sans, sans-serif">?</text></g>
<g transform="translate(1270,1025.5)"><path d="M0 1.6 Q5.5 -1 11 1.6 L10.5 3.4 H7.2 V7.6 Q5.5 8.6 3.8 7.6 V3.4 H0.5 Z" fill="#86868a"/><path d="M1 1.6 Q5.5 0 10 1.6" stroke="#bcbcc0" stroke-width="0.8" fill="none"/></g>
<g transform="translate(1287,1024)"><g stroke="#1414e0" stroke-width="1.5"><line x1="2.5" y1="0" x2="2.5" y2="8"/><line x1="9" y1="0" x2="9" y2="8"/></g><polygon points="0,7 5,7 2.5,12" fill="#1414e0"/><polygon points="6.5,7 11.5,7 9,12" fill="#1414e0"/><line x1="0.5" y1="0.5" x2="4" y2="0.5" stroke="#20a020"/><line x1="7" y1="0.5" x2="11" y2="0.5" stroke="#e02020"/></g>
<g transform="translate(1304,1024)"><line x1="1.5" y1="10.5" x2="10" y2="1.5" stroke="#8fb0dc" stroke-width="2"/><circle cx="1.5" cy="10.5" r="1.3" fill="#e01818"/><circle cx="10" cy="1.5" r="1.3" fill="#e01818"/><circle cx="3.5" cy="3.5" r="2.2" fill="none" stroke="#555" stroke-width="1.4"/><path d="M7.5 8.5 L11 12 M11 8.5 L7.5 12" stroke="#333" stroke-width="1"/></g>
<g transform="translate(1321,1024)"><rect x="1" y="1" width="3.2" height="10" fill="#fff" stroke="#333" stroke-width="0.9"/><rect x="7" y="0" width="5" height="3.6" fill="#e01818"/><polygon points="6.5,5.5 11,5.5 8.7,8" fill="#555"/><line x1="5.3" y1="0.5" x2="5.3" y2="12" stroke="#e02020" stroke-width="0.8" stroke-dasharray="1.5 1"/></g>
<g transform="translate(1338,1024)"><rect x="1" y="1" width="3.2" height="10" fill="#fff" stroke="#333" stroke-width="0.9"/><rect x="6.5" y="8.5" width="5.5" height="3.6" fill="#20c020"/><polygon points="6.8,7 11.5,7 9.2,4.2" fill="#555"/><line x1="5.3" y1="0.5" x2="5.3" y2="12" stroke="#e02020" stroke-width="0.8" stroke-dasharray="1.5 1"/></g>
<g transform="translate(1270,1041.5)"><path d="M0 1.6 Q5.5 -1 11 1.6 L10.5 3.4 H7.2 V7.6 Q5.5 8.6 3.8 7.6 V3.4 H0.5 Z" fill="#86868a"/><path d="M1 1.6 Q5.5 0 10 1.6" stroke="#bcbcc0" stroke-width="0.8" fill="none"/></g>
<g transform="translate(1287,1040)"><g stroke="#1414e0" stroke-width="1.5"><line x1="2.5" y1="0" x2="2.5" y2="8"/><line x1="9" y1="0" x2="9" y2="8"/></g><polygon points="0,7 5,7 2.5,12" fill="#1414e0"/><polygon points="6.5,7 11.5,7 9,12" fill="#1414e0"/><line x1="0.5" y1="0.5" x2="4" y2="0.5" stroke="#20a020"/><line x1="7" y1="0.5" x2="11" y2="0.5" stroke="#e02020"/></g>
<g transform="translate(1304,1040)"><line x1="1.5" y1="10.5" x2="10" y2="1.5" stroke="#8fb0dc" stroke-width="2"/><circle cx="1.5" cy="10.5" r="1.3" fill="#e01818"/><circle cx="10" cy="1.5" r="1.3" fill="#e01818"/><circle cx="3.5" cy="3.5" r="2.2" fill="none" stroke="#555" stroke-width="1.4"/><path d="M7.5 8.5 L11 12 M11 8.5 L7.5 12" stroke="#333" stroke-width="1"/></g>
<g transform="translate(1321,1040)"><rect x="1" y="1" width="3.2" height="10" fill="#fff" stroke="#333" stroke-width="0.9"/><rect x="7" y="0" width="5" height="3.6" fill="#e01818"/><polygon points="6.5,5.5 11,5.5 8.7,8" fill="#555"/><line x1="5.3" y1="0.5" x2="5.3" y2="12" stroke="#e02020" stroke-width="0.8" stroke-dasharray="1.5 1"/></g>
<g transform="translate(1338,1040)"><rect x="1" y="1" width="3.2" height="10" fill="#fff" stroke="#333" stroke-width="0.9"/><rect x="6.5" y="8.5" width="5.5" height="3.6" fill="#20c020"/><polygon points="6.8,7 11.5,7 9.2,4.2" fill="#555"/><line x1="5.3" y1="0.5" x2="5.3" y2="12" stroke="#e02020" stroke-width="0.8" stroke-dasharray="1.5 1"/></g>
<g transform="translate(1270,1057.5)"><path d="M0 1.6 Q5.5 -1 11 1.6 L10.5 3.4 H7.2 V7.6 Q5.5 8.6 3.8 7.6 V3.4 H0.5 Z" fill="#86868a"/><path d="M1 1.6 Q5.5 0 10 1.6" stroke="#bcbcc0" stroke-width="0.8" fill="none"/></g>
<g transform="translate(1287,1056)"><g stroke="#1414e0" stroke-width="1.5"><line x1="2.5" y1="0" x2="2.5" y2="8"/><line x1="9" y1="0" x2="9" y2="8"/></g><polygon points="0,7 5,7 2.5,12" fill="#1414e0"/><polygon points="6.5,7 11.5,7 9,12" fill="#1414e0"/><line x1="0.5" y1="0.5" x2="4" y2="0.5" stroke="#20a020"/><line x1="7" y1="0.5" x2="11" y2="0.5" stroke="#e02020"/></g>
<g transform="translate(1304,1056)"><line x1="1.5" y1="10.5" x2="10" y2="1.5" stroke="#8fb0dc" stroke-width="2"/><circle cx="1.5" cy="10.5" r="1.3" fill="#e01818"/><circle cx="10" cy="1.5" r="1.3" fill="#e01818"/><circle cx="3.5" cy="3.5" r="2.2" fill="none" stroke="#555" stroke-width="1.4"/><path d="M7.5 8.5 L11 12 M11 8.5 L7.5 12" stroke="#333" stroke-width="1"/></g>
<g transform="translate(1321,1056)"><rect x="1" y="1" width="3.2" height="10" fill="#fff" stroke="#333" stroke-width="0.9"/><rect x="7" y="0" width="5" height="3.6" fill="#e01818"/><polygon points="6.5,5.5 11,5.5 8.7,8" fill="#555"/><line x1="5.3" y1="0.5" x2="5.3" y2="12" stroke="#e02020" stroke-width="0.8" stroke-dasharray="1.5 1"/></g>
<g transform="translate(1338,1056)"><rect x="1" y="1" width="3.2" height="10" fill="#fff" stroke="#333" stroke-width="0.9"/><rect x="6.5" y="8.5" width="5.5" height="3.6" fill="#20c020"/><polygon points="6.8,7 11.5,7 9.2,4.2" fill="#555"/><line x1="5.3" y1="0.5" x2="5.3" y2="12" stroke="#e02020" stroke-width="0.8" stroke-dasharray="1.5 1"/></g>
</svg>
<svg width="1714" height="1065" viewBox="0 0 1714 1065"><g fill="none" stroke="#ff5a0a" stroke-width="3.8" stroke-linecap="round" stroke-linejoin="round">
<path d="M614.5 399.5 C614.9 393.0 616.0 386.5 615.6 380.0 C614.4 360.9 611.9 342.0 609.7 323.0 C608.0 307.9 605.8 292.9 604.0 277.8 C602.0 261.5 599.7 245.3 598.4 229.0 C596.9 210.3 594.5 191.4 595.8 172.7 C596.4 163.5 599.3 154.3 604.0 146.4 C609.2 137.6 616.4 129.8 624.7 123.8 C633.1 117.7 643.1 114.0 652.9 110.7 C662.6 107.5 672.8 105.8 682.9 104.3 C689.9 103.3 697.0 103.6 704.0 103.2" stroke-width="3.8"/>
<path d="M666.0 93.0 C672.7 94.0 679.5 94.3 686.0 96.0 C692.7 97.7 698.9 100.8 705.4 103.2" stroke-width="3.8"/>
<path d="M705.4 103.2 C702.6 106.5 699.6 109.6 697.0 113.0 C693.6 117.5 690.6 122.3 687.4 126.9" stroke-width="3.8"/>
<path d="M646.7 408.7 C641.1 413.2 635.9 418.4 629.8 422.2 C621.2 427.5 611.9 431.5 602.8 435.8 C591.6 441.1 580.4 446.2 569.0 451.0 C557.8 455.7 546.4 459.8 535.2 464.5 C523.8 469.3 512.6 474.4 501.4 479.7 C490.0 485.1 478.6 490.5 467.6 496.6 C456.0 503.1 444.9 510.3 433.8 517.5 C422.4 524.9 411.3 532.8 400.0 540.5 C390.5 547.0 381.2 553.9 371.4 560.0 C361.1 566.5 350.2 572.1 339.7 578.3 C331.5 583.1 323.4 588.1 315.3 593.0 C307.2 597.9 299.0 602.6 290.9 607.6 C282.7 612.6 274.6 617.8 266.5 623.0 C258.3 628.3 250.2 633.9 242.0 639.3 C233.9 644.6 225.7 649.9 217.6 655.2 C209.5 660.5 201.1 665.5 193.2 671.1 C184.9 676.9 176.6 682.9 168.8 689.4 C162.0 695.1 155.0 700.9 149.3 707.7 C144.0 714.0 139.3 720.9 135.9 728.4 C132.7 735.3 130.7 742.8 129.8 750.4 C129.0 756.9 129.2 763.6 131.0 769.9 C132.5 775.3 135.4 780.7 139.5 784.6 C144.2 789.0 150.4 791.9 156.6 793.8 C164.5 796.2 172.8 796.5 181.0 797.2 C189.1 797.9 197.3 798.3 205.4 798.0 C213.6 797.7 221.7 796.9 229.8 795.5 C238.1 794.0 246.2 791.8 254.2 789.4 C262.5 786.9 270.6 783.9 278.7 780.9 C286.9 777.8 295.0 774.5 303.1 771.1 C311.3 767.6 319.4 763.8 327.5 760.1 C335.6 756.5 343.8 752.8 351.9 749.2 C360.0 745.5 368.1 741.8 376.3 738.2 C384.2 734.8 391.9 730.9 400.0 728.1 C411.1 724.2 422.8 722.1 433.8 718.0 C445.4 713.7 456.8 708.7 467.6 702.7 C479.4 696.2 490.1 688.1 501.4 680.8 C512.7 673.5 523.9 666.1 535.2 658.8 C546.5 651.5 557.9 644.3 569.0 636.8 C580.4 629.1 592.1 621.8 602.8 613.2 C614.6 603.7 626.2 593.8 636.6 582.8 C646.5 572.3 655.7 561.1 663.6 549.0 C670.5 538.4 676.1 527.0 680.5 515.2 C684.6 504.3 685.9 492.6 689.0 481.4 C691.5 472.3 695.5 463.6 697.4 454.3 C698.5 448.8 699.2 442.9 698.1 437.4 C696.9 431.4 694.2 425.6 690.6 420.6 C685.9 414.1 680.4 407.9 673.7 403.7 C666.6 399.3 658.3 396.8 650.1 395.2 C643.5 393.9 636.5 394.5 629.8 395.2 C625.2 395.7 620.8 397.3 616.3 398.6 C614.0 399.3 611.8 400.2 609.5 401.0" stroke-width="4.0"/>
<path d="M895.9 88.5 C888.7 88.1 881.6 87.2 874.4 87.2 C865.5 87.3 856.5 88.3 847.6 88.8 C838.7 89.3 829.7 90.2 820.8 90.4 C811.8 90.6 802.9 90.5 793.9 90.1 C785.0 89.7 776.0 89.0 767.1 88.1 C758.1 87.2 749.3 85.4 740.3 84.5 C733.6 83.8 726.8 83.3 720.1 83.4 C717.4 83.4 713.7 82.7 712.0 84.8 C710.0 87.2 711.0 91.1 711.4 94.2 C711.9 98.3 713.2 102.4 714.8 106.2 C716.1 109.4 717.4 112.9 720.1 115.0 C723.9 117.9 728.8 119.2 733.5 120.3 C742.3 122.3 751.4 123.3 760.4 124.3 C771.5 125.5 782.7 126.6 793.9 127.0 C807.3 127.5 820.8 127.3 834.2 127.0 C847.6 126.7 861.0 125.5 874.4 125.0 C883.4 124.6 892.3 124.8 901.3 124.3 C904.0 124.1 907.3 124.8 909.3 123.0 C911.2 121.3 911.3 118.2 911.4 115.6 C911.6 110.7 910.9 105.7 910.0 100.9 C909.3 96.8 908.7 92.5 906.7 88.8 C905.6 86.8 903.5 85.1 901.3 84.5 C897.0 83.4 892.4 84.1 887.9 84.1 C881.2 84.1 874.4 84.0 867.7 84.5 C858.4 85.2 849.2 86.5 840.0 87.5" stroke-width="4.2"/>
<path d="M1476.7 311.6 C1472.6 318.1 1469.3 325.1 1464.4 331.0 C1457.9 338.8 1450.4 345.8 1442.8 352.6 C1428.7 365.3 1413.8 376.9 1399.6 389.4 C1388.6 399.2 1378.0 409.5 1367.2 419.6 C1356.4 429.7 1345.6 439.7 1334.8 449.8 C1324.0 459.9 1313.2 470.0 1302.4 480.1" stroke-width="3.0"/>
<path d="M1632.8 437.9 C1629.9 437.3 1627.0 436.6 1624.0 436.2 C1618.8 435.5 1613.6 434.5 1608.3 434.4 C1579.7 434.0 1551.1 434.3 1522.5 434.8 C1505.0 435.1 1487.5 436.5 1470.0 436.9 C1453.3 437.2 1436.7 437.0 1420.0 436.9 C1390.3 436.8 1360.5 436.2 1330.8 436.4 C1310.4 436.6 1289.9 437.0 1269.5 438.1 C1243.3 439.6 1217.2 443.2 1191.0 444.2 C1164.1 445.2 1137.2 445.2 1110.3 444.2 C1092.3 443.5 1074.4 440.1 1056.4 439.3 C1037.6 438.4 1018.8 439.5 1000.0 439.1 C988.3 438.9 976.7 438.2 965.0 437.4 C954.5 436.7 944.1 435.4 933.6 434.8 C926.6 434.4 919.5 434.8 912.5 434.4 C906.6 434.1 900.9 432.9 895.0 432.7 C884.5 432.4 874.0 433.3 863.5 433.0 C857.6 432.8 851.9 431.4 846.0 431.3 C829.1 431.0 812.2 432.3 795.3 431.6 C788.8 431.3 782.5 428.7 776.0 428.3 C765.0 427.6 753.9 428.0 742.8 428.3 C741.2 428.3 739.4 428.3 738.2 429.3 C737.2 430.1 737.1 431.7 737.0 433.0 C736.7 441.2 737.0 449.3 737.0 457.5 C737.0 464.5 736.5 471.5 737.0 478.5 C737.3 483.2 739.0 487.8 739.3 492.5 C739.8 501.3 739.4 510.0 739.3 518.8 C739.2 527.5 738.8 536.3 738.9 545.0 C738.9 546.7 739.1 548.5 739.8 550.0 C740.5 551.5 741.4 553.1 742.8 553.8 C746.6 555.8 750.8 557.0 755.0 557.8 C761.9 559.1 769.0 559.7 776.0 559.9 C799.3 560.4 822.7 560.3 846.0 559.9 C856.5 559.7 867.0 558.7 877.5 558.2 C892.1 557.5 906.7 556.5 921.3 556.4 C947.5 556.2 973.8 557.8 1000.0 557.4 C1020.5 557.1 1040.9 555.1 1061.3 554.5 C1075.2 554.1 1089.1 554.0 1103.0 554.5 C1125.9 555.2 1148.6 557.7 1171.5 558.1 C1236.9 559.2 1302.2 559.3 1367.6 558.9 C1385.1 558.8 1402.5 556.8 1420.0 556.4 C1437.8 556.0 1455.7 556.7 1473.5 556.4 C1479.3 556.3 1485.2 555.3 1491.0 555.2 C1510.3 554.9 1529.5 554.8 1548.8 555.2 C1556.4 555.4 1563.9 556.7 1571.5 556.9 C1576.8 557.1 1582.1 557.2 1587.3 556.4 C1593.8 555.4 1600.0 552.9 1606.5 551.7 C1612.9 550.5 1619.6 551.3 1625.8 549.4 C1629.2 548.4 1632.4 546.1 1634.6 543.3 C1636.5 540.9 1637.5 537.6 1637.7 534.5 C1638.2 526.3 1636.9 518.2 1636.8 510.0 C1636.7 498.3 1637.3 486.7 1637.2 475.0 C1637.2 470.9 1637.2 466.8 1636.3 462.8 C1635.2 457.9 1632.4 453.6 1631.0 448.8 C1630.2 446.2 1630.1 443.5 1629.7 440.9" stroke-width="3.8"/>
<path d="M197.4 945.2 C201.7 943.8 205.9 941.9 210.3 940.9 C215.3 939.8 220.4 939.2 225.5 939.1 C233.1 938.9 240.7 939.7 248.3 939.9 C260.9 940.3 273.6 940.3 286.2 940.9 C296.3 941.3 306.4 942.2 316.5 942.9 C326.6 943.6 336.8 944.4 346.9 945.2 C357.0 946.0 367.1 946.9 377.2 947.9 C384.8 948.7 392.6 948.8 400.0 950.5 C402.8 951.2 405.7 952.7 407.5 955.0 C409.7 957.8 410.1 961.6 411.3 964.9 C412.6 968.4 414.5 971.8 415.1 975.5 C415.3 977.1 415.1 979.4 413.6 980.1 C409.4 982.0 404.6 982.1 400.0 982.3 C387.3 983.0 374.7 982.7 362.0 982.8 C346.8 982.9 331.7 983.0 316.5 983.1 C301.3 983.1 286.2 983.0 271.0 983.1 C260.9 983.1 250.8 983.2 240.7 983.4 C237.4 983.5 234.0 984.7 230.8 983.9 C229.1 983.5 227.6 981.8 227.3 980.1 C226.5 976.1 227.5 972.0 227.8 967.9 C228.2 962.9 228.7 957.8 229.3 952.8 C229.7 949.0 230.3 945.2 230.8 941.4" stroke-width="4.5"/>
<path d="M1341.2 949.3 C1332.6 957.0 1323.8 964.4 1315.5 972.4 C1308.3 979.4 1301.2 986.4 1295.0 994.2 C1292.8 997.0 1292.0 1000.6 1290.5 1003.8" stroke-width="3.1"/>
<path d="M1292.4 978.8 C1291.8 987.1 1283.9 998.7 1290.5 1003.8 C1296.8 1008.6 1304.6 996.9 1311.7 993.5" stroke-width="3.1"/>
<path d="M1232.7 1018.6 C1236.8 1016.5 1240.6 1013.7 1244.9 1012.2 C1250.3 1010.3 1255.9 1009.1 1261.6 1008.3 C1266.7 1007.6 1272.0 1006.7 1277.0 1007.7 C1280.8 1008.5 1284.6 1010.5 1287.3 1013.4 C1289.8 1016.2 1291.0 1020.0 1291.8 1023.7 C1292.5 1027.1 1292.7 1030.7 1291.8 1034.0 C1291.1 1036.4 1289.5 1038.8 1287.3 1039.8 C1284.1 1041.2 1280.4 1041.1 1277.0 1040.4 C1272.9 1039.6 1268.9 1037.8 1265.5 1035.3 C1262.3 1033.0 1259.7 1029.8 1257.8 1026.3 C1256.3 1023.6 1255.3 1020.3 1255.8 1017.3 C1256.2 1014.5 1258.8 1012.6 1260.3 1010.2" stroke-width="3.1"/>
<path d="M1358.5 949.9 C1361.3 949.3 1364.0 947.9 1366.9 948.0 C1369.2 948.1 1371.9 948.7 1373.3 950.5 C1374.6 952.2 1374.6 954.9 1373.9 957.0 C1373.2 959.3 1371.2 961.1 1369.4 962.7 C1367.9 964.1 1365.6 964.4 1364.3 965.9 C1363.6 966.7 1363.2 968.2 1363.7 969.2 C1364.6 970.9 1366.7 971.7 1368.2 973.0" stroke-width="3.1"/>
</g>
<circle cx="1366" cy="990" r="2" fill="#ff5a0a"/>
<g fill="none" stroke="#ff5a0a" stroke-width="2.6" stroke-linecap="round" stroke-linejoin="round"><ellipse cx="1293.8" cy="485.5" rx="4" ry="18"/><path d="M1295 467.5 L1334.5 498.4 L1291.6 504.9 Z"/><path d="M1296 472 L1297 500 L1322 500 L1301 480 L1303 497 L1314 496 L1305 487 L1308 493 M1300 503 L1326 497 L1322 503 Z"/><circle cx="1306.7" cy="490.5" r="3.6"/><circle cx="1322" cy="501" r="2"/></g>
<path d="M238.6 699 L219.5 717" stroke="#ff5a0a" stroke-width="6" fill="none"/><path d="M215.4 709.6 L226.5 720.8 L214 731 L205.2 731 L205.2 722.3 L212.5 722.3 Z" fill="#ff5a0a"/>
</svg>
</body></html>
